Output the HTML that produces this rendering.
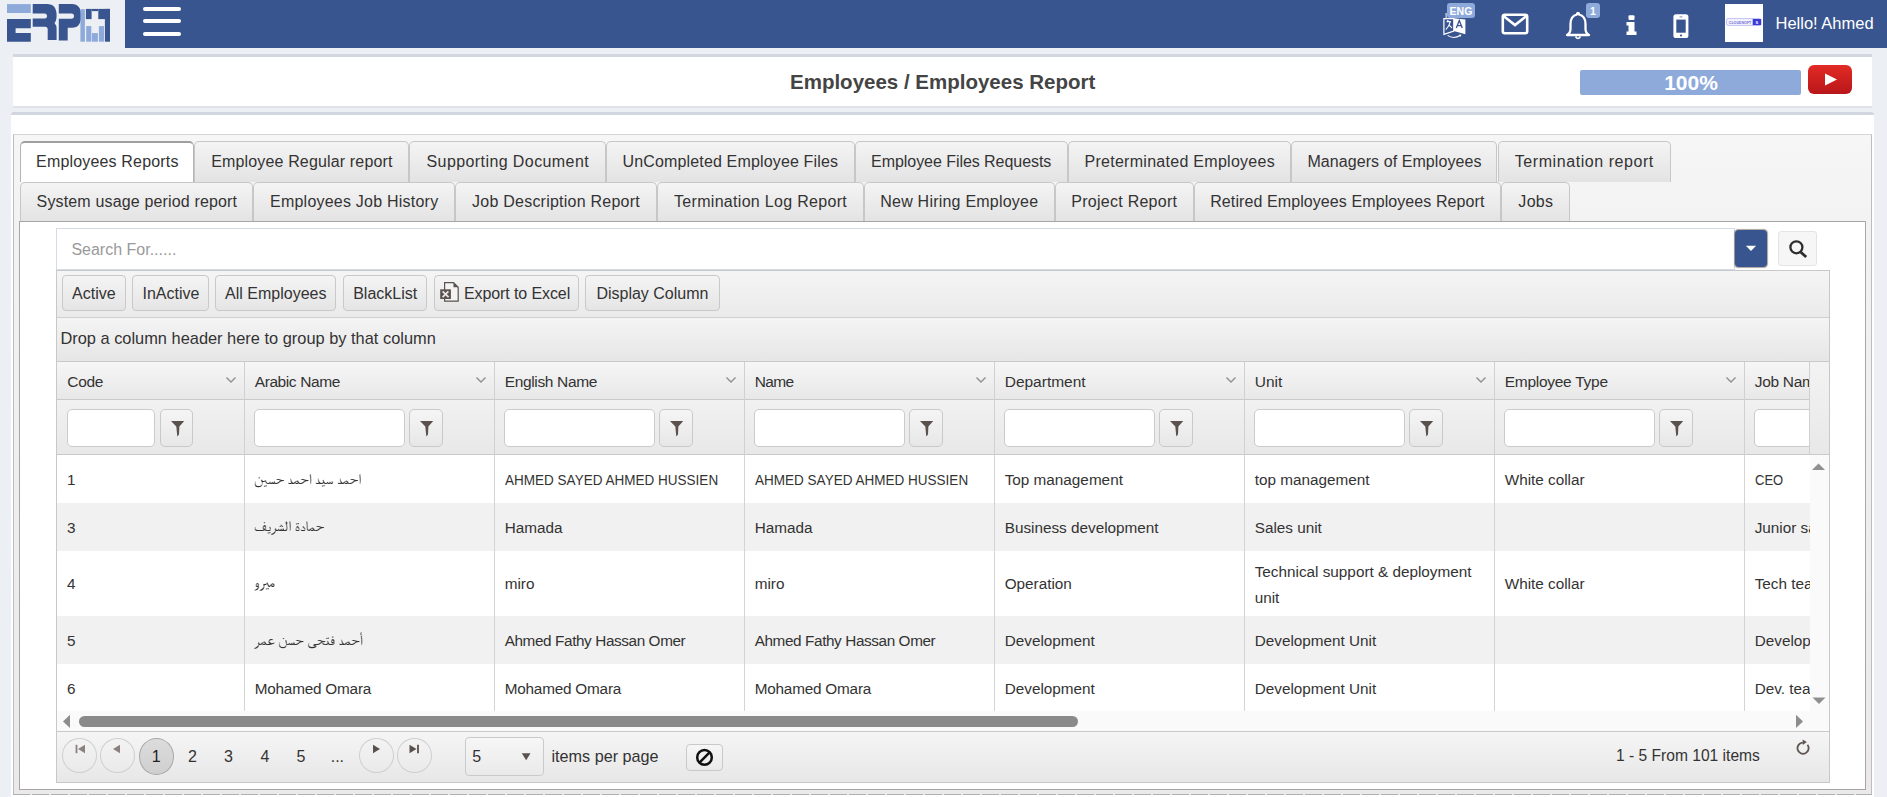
<!DOCTYPE html>
<html><head><meta charset="utf-8"><title>Employees Report</title>
<style>
html,body{margin:0;padding:0;}
body{width:1887px;height:797px;overflow:hidden;position:relative;background:#eceff4;font-family:"Liberation Sans", sans-serif;}
</style></head>
<body>
<div style="position:absolute;left:125px;top:0px;width:1762px;height:47.6px;background:#39558f"></div>
<svg style="position:absolute;left:0;top:0" width="125" height="47" viewBox="0 0 125 47">
<rect x="7" y="4.1" width="23.8" height="8.9" fill="#8eaadb"/>
<path d="M7 19.1H30.8V28.3H15.6V33.1H30.8V41.7H7Z" fill="#39558f"/>
<path d="M32.7 4.1H47Q56.6 4.1 56.6 15.5Q56.6 21 54.5 23Q56.6 25 56.6 29V40.1H47.7V29.5Q47.7 26.7 45 26.7H32.7V18.4H44.5Q47 18.4 47 15.9Q47 13.4 44.5 13.4H32.7Z" fill="#39558f"/>
<path d="M58.8 4.1H72Q81.1 4.1 81.1 15.9Q81.1 27.7 72 27.7H67.7V40.4H58.8V18.8H71.5Q74 18.8 74 16.1Q74 13.4 71.5 13.4H58.8Z" fill="#39558f"/>
<rect x="80.4" y="9.2" width="4.5" height="32.5" fill="#8eaadb"/>
<rect x="85.9" y="8.9" width="5.7" height="10.2" fill="#39558f"/>
<rect x="91.6" y="8.9" width="6.7" height="2.2" fill="#39558f"/>
<rect x="98.3" y="8.9" width="11.7" height="10.2" fill="#39558f"/>
<rect x="104.9" y="8.9" width="5.1" height="32.8" fill="#39558f"/>
<rect x="86.2" y="26.1" width="5.1" height="15.6" fill="#8eaadb"/>
<rect x="91.9" y="33.1" width="6" height="8.6" fill="#8eaadb"/>
<rect x="98.9" y="26.1" width="5.1" height="15.6" fill="#8eaadb"/>
</svg>
<div style="position:absolute;left:143px;top:7px;width:38px;height:4px;background:#fff;border-radius:2px"></div>
<div style="position:absolute;left:143px;top:19px;width:38px;height:4px;background:#fff;border-radius:2px"></div>
<div style="position:absolute;left:143px;top:32px;width:38px;height:4px;background:#fff;border-radius:2px"></div>
<svg style="position:absolute;left:1438px;top:0px" width="42" height="42" viewBox="0 0 42 42">
<path d="M5.9 18.6L15.8 18.4V31.1L5.9 34.4Z" fill="none" stroke="#fff" stroke-width="1.2"/>
<path d="M15.8 18.2L27.4 19.5V34.2L15.8 31.1Z" fill="#fff"/>
<path d="M8.1 13V17.8" stroke="#fff" stroke-width="1"/>
<path d="M18.3 28L21.3 20.6L24.3 28M19.3 25.6H23.4" fill="none" stroke="#39558f" stroke-width="1.3"/>
<path d="M8.6 21.6H12.8M12.4 21.6Q11 26.5 7.8 29.6M10.6 24.6L14 27.8M9.8 20V21.6" fill="none" stroke="#fff" stroke-width="1.1"/>
<path d="M9.6 35.4Q15.5 39.6 22.6 35.2" fill="none" stroke="#fff" stroke-width="1.1"/>
<path d="M20.8 34.6L23.4 34.8L22.4 37Z" fill="#fff"/>
</svg>
<div style="position:absolute;left:1447px;top:3px;width:28px;height:15px;background:#8eaadb;border-radius:3px"></div>
<div style="position:absolute;left:1161px;width:600px;text-align:center;top:5.75px;font-size:10.5px;line-height:10.5px;font-weight:700;color:#fff;white-space:nowrap;">ENG</div>
<svg style="position:absolute;left:1501px;top:13px" width="28" height="22" viewBox="0 0 28 22">
<rect x="1.8" y="1.8" width="24.4" height="18.4" rx="2" fill="none" stroke="#fff" stroke-width="2.6"/>
<path d="M2.5 3L14 12L25.5 3" fill="none" stroke="#fff" stroke-width="2.6"/>
</svg>
<svg style="position:absolute;left:1564px;top:12px" width="28" height="28" viewBox="0 0 28 28">
<path d="M13 2.5Q13 1 14 1Q15 1 15 2.5Q21.5 4 21.5 12V17Q21.5 21 25 23H3Q6.5 21 6.5 17V12Q6.5 4 13 2.5Z" fill="none" stroke="#fff" stroke-width="2.3" stroke-linejoin="round"/>
<path d="M11.5 24.5Q14 28.5 16.5 24.5" fill="none" stroke="#fff" stroke-width="1.6"/>
</svg>
<div style="position:absolute;left:1586px;top:3px;width:14px;height:15px;background:#8eaadb;border-radius:3px"></div>
<div style="position:absolute;left:1293px;width:600px;text-align:center;top:5.75px;font-size:10.5px;line-height:10.5px;font-weight:700;color:#fff;white-space:nowrap;">1</div>
<svg style="position:absolute;left:1625px;top:14px" width="14" height="22" viewBox="0 0 14 22">
<rect x="3.5" y="1.2" width="6" height="4.8" rx="1" fill="#fff"/>
<path d="M1.5 8H9.5V17.5H11.5V21H1.5V17.5H3.5V11.5H1.5Z" fill="#fff"/>
</svg>
<svg style="position:absolute;left:1672px;top:13px" width="18" height="26" viewBox="0 0 18 26">
<rect x="1.4" y="1.2" width="15" height="23.8" rx="2.6" fill="#fff"/>
<rect x="4.3" y="6.6" width="9.4" height="13.1" fill="#39558f"/>
<path d="M7.6 3.9H10.4" stroke="#39558f" stroke-width="0.7"/>
<circle cx="9" cy="22.5" r="1.1" fill="#39558f"/>
</svg>
<div style="position:absolute;left:1725px;top:4px;width:38px;height:38px;background:#fff"></div>
<svg style="position:absolute;left:1725px;top:4px" width="38" height="38" viewBox="0 0 38 38">
<rect x="1.5" y="14.6" width="34.5" height="6.8" rx="1.5" fill="#f4f4ff" stroke="#b4b4ee" stroke-width="0.8"/>
<rect x="27.7" y="15" width="8.4" height="6.1" fill="#3a3ad6"/>
<text x="3.8" y="19.8" font-family="Liberation Sans" font-size="4" font-weight="700" fill="#6a6ad0" textLength="22.5" lengthAdjust="spacingAndGlyphs">CLOUDSOFT</text>
<text x="31.9" y="19.9" font-family="Liberation Sans" font-size="4" font-weight="700" fill="#fff" text-anchor="middle">S</text>
</svg>
<div style="position:absolute;left:1775.5px;top:14.75px;font-size:16.5px;line-height:16.5px;font-weight:400;color:#fff;white-space:nowrap;">Hello! Ahmed</div>
<div style="position:absolute;left:13px;top:54px;width:1859px;height:54px;background:#fff;border-top:3px solid #d2d6de;border-bottom:2px solid #dfe2e8;box-sizing:border-box"></div>
<div style="position:absolute;left:790px;top:71.55px;font-size:20.5px;line-height:20.5px;font-weight:700;color:#444;white-space:nowrap;">Employees / Employees Report</div>
<div style="position:absolute;left:1580px;top:70px;width:221px;height:24.5px;background:#8eaadb;border-radius:2px"></div>
<div style="position:absolute;left:1391px;width:600px;text-align:center;top:72.30px;font-size:21px;line-height:21px;font-weight:700;color:#fff;white-space:nowrap;">100%</div>
<div style="position:absolute;left:1808px;top:65px;width:44px;height:29px;background:linear-gradient(#e22b25,#b8161a);border-radius:6px"></div>
<svg style="position:absolute;left:1808px;top:65px" width="44" height="29"><path d="M17 8.5L29 14.5L17 20.5Z" fill="#fff"/></svg>
<div style="position:absolute;left:11px;top:112px;width:1863px;height:700px;background:#fff;border-top:3px solid #d2d6de;border-radius:3px;box-sizing:border-box"></div>
<div style="position:absolute;left:13px;top:134px;width:1859px;height:661px;background:linear-gradient(#f6f6f6 0%,#f3f2f2 15%,#ebe9e9 100%);border:1px solid #bdbdbd;border-top-color:#d6d6d6;border-bottom:none;box-sizing:border-box"></div>
<div style="position:absolute;left:13px;top:794px;width:1859px;height:1px;background:repeating-linear-gradient(90deg,#b0b0b0 0 17px,#e6e6e6 17px 19px)"></div>
<div style="position:absolute;left:20.2px;top:140.5px;width:174.10000000000002px;height:41.5px;background:#fff;border:1px solid #b4b4b4;border-top:2px solid #9f9f9f;border-bottom:none;border-radius:5px 5px 0 0;box-sizing:border-box"></div>
<div style="position:absolute;left:194.3px;top:140.5px;width:215.0px;height:41.5px;background:linear-gradient(#f4f4f4,#e4e3e3);border:1px solid #c7c7c7;border-bottom:none;border-radius:5px 5px 0 0;box-sizing:border-box"></div>
<div style="position:absolute;left:409.3px;top:140.5px;width:196.59999999999997px;height:41.5px;background:linear-gradient(#f4f4f4,#e4e3e3);border:1px solid #c7c7c7;border-bottom:none;border-radius:5px 5px 0 0;box-sizing:border-box"></div>
<div style="position:absolute;left:605.9px;top:140.5px;width:248.70000000000005px;height:41.5px;background:linear-gradient(#f4f4f4,#e4e3e3);border:1px solid #c7c7c7;border-bottom:none;border-radius:5px 5px 0 0;box-sizing:border-box"></div>
<div style="position:absolute;left:854.6px;top:140.5px;width:213.19999999999993px;height:41.5px;background:linear-gradient(#f4f4f4,#e4e3e3);border:1px solid #c7c7c7;border-bottom:none;border-radius:5px 5px 0 0;box-sizing:border-box"></div>
<div style="position:absolute;left:1067.8px;top:140.5px;width:223.60000000000014px;height:41.5px;background:linear-gradient(#f4f4f4,#e4e3e3);border:1px solid #c7c7c7;border-bottom:none;border-radius:5px 5px 0 0;box-sizing:border-box"></div>
<div style="position:absolute;left:1291.4px;top:140.5px;width:206.0999999999999px;height:41.5px;background:linear-gradient(#f4f4f4,#e4e3e3);border:1px solid #c7c7c7;border-bottom:none;border-radius:5px 5px 0 0;box-sizing:border-box"></div>
<div style="position:absolute;left:1497.5px;top:140.5px;width:173.0999999999999px;height:41.5px;background:linear-gradient(#f4f4f4,#e4e3e3);border:1px solid #c7c7c7;border-bottom:none;border-radius:5px 5px 0 0;box-sizing:border-box"></div>
<div style="position:absolute;left:20.2px;top:182px;width:233.20000000000002px;height:39.5px;background:linear-gradient(#f4f4f4,#e4e3e3);border:1px solid #c7c7c7;border-bottom:none;border-radius:5px 5px 0 0;box-sizing:border-box"></div>
<div style="position:absolute;left:253.4px;top:182px;width:201.4px;height:39.5px;background:linear-gradient(#f4f4f4,#e4e3e3);border:1px solid #c7c7c7;border-bottom:none;border-radius:5px 5px 0 0;box-sizing:border-box"></div>
<div style="position:absolute;left:454.8px;top:182px;width:202.2px;height:39.5px;background:linear-gradient(#f4f4f4,#e4e3e3);border:1px solid #c7c7c7;border-bottom:none;border-radius:5px 5px 0 0;box-sizing:border-box"></div>
<div style="position:absolute;left:657px;top:182px;width:206.79999999999995px;height:39.5px;background:linear-gradient(#f4f4f4,#e4e3e3);border:1px solid #c7c7c7;border-bottom:none;border-radius:5px 5px 0 0;box-sizing:border-box"></div>
<div style="position:absolute;left:863.8px;top:182px;width:190.79999999999995px;height:39.5px;background:linear-gradient(#f4f4f4,#e4e3e3);border:1px solid #c7c7c7;border-bottom:none;border-radius:5px 5px 0 0;box-sizing:border-box"></div>
<div style="position:absolute;left:1054.6px;top:182px;width:139.10000000000014px;height:39.5px;background:linear-gradient(#f4f4f4,#e4e3e3);border:1px solid #c7c7c7;border-bottom:none;border-radius:5px 5px 0 0;box-sizing:border-box"></div>
<div style="position:absolute;left:1193.7px;top:182px;width:307.29999999999995px;height:39.5px;background:linear-gradient(#f4f4f4,#e4e3e3);border:1px solid #c7c7c7;border-bottom:none;border-radius:5px 5px 0 0;box-sizing:border-box"></div>
<div style="position:absolute;left:1501px;top:182px;width:69.40000000000009px;height:39.5px;background:linear-gradient(#f4f4f4,#e4e3e3);border:1px solid #c7c7c7;border-bottom:none;border-radius:5px 5px 0 0;box-sizing:border-box"></div>
<div style="position:absolute;left:19px;top:221px;width:1847px;height:568.5px;background:#fff;border:1.5px solid #a6a6a6;box-sizing:border-box"></div>
<div style="position:absolute;left:-192.75px;width:600px;text-align:center;top:153.70px;font-size:16px;line-height:16px;font-weight:400;color:#333;white-space:nowrap;letter-spacing:0.169px;text-indent:0.169px">Employees Reports</div>
<div style="position:absolute;left:1.8000000000000114px;width:600px;text-align:center;top:153.70px;font-size:16px;line-height:16px;font-weight:400;color:#333;white-space:nowrap;letter-spacing:0.155px;text-indent:0.155px">Employee Regular report</div>
<div style="position:absolute;left:207.60000000000002px;width:600px;text-align:center;top:153.70px;font-size:16px;line-height:16px;font-weight:400;color:#333;white-space:nowrap;letter-spacing:0.411px;text-indent:0.411px">Supporting Document</div>
<div style="position:absolute;left:430.25px;width:600px;text-align:center;top:153.70px;font-size:16px;line-height:16px;font-weight:400;color:#333;white-space:nowrap;letter-spacing:0.152px;text-indent:0.152px">UnCompleted Employee Files</div>
<div style="position:absolute;left:661.2px;width:600px;text-align:center;top:153.70px;font-size:16px;line-height:16px;font-weight:400;color:#333;white-space:nowrap;letter-spacing:-0.050px;text-indent:-0.050px">Employee Files Requests</div>
<div style="position:absolute;left:879.5999999999999px;width:600px;text-align:center;top:153.70px;font-size:16px;line-height:16px;font-weight:400;color:#333;white-space:nowrap;letter-spacing:0.282px;text-indent:0.282px">Preterminated Employees</div>
<div style="position:absolute;left:1094.45px;width:600px;text-align:center;top:153.70px;font-size:16px;line-height:16px;font-weight:400;color:#333;white-space:nowrap;letter-spacing:0.070px;text-indent:0.070px">Managers of Employees</div>
<div style="position:absolute;left:1284.05px;width:600px;text-align:center;top:153.70px;font-size:16px;line-height:16px;font-weight:400;color:#333;white-space:nowrap;letter-spacing:0.559px;text-indent:0.559px">Termination report</div>
<div style="position:absolute;left:-163.2px;width:600px;text-align:center;top:193.90px;font-size:16px;line-height:16px;font-weight:400;color:#333;white-space:nowrap;letter-spacing:0.156px;text-indent:0.156px">System usage period report</div>
<div style="position:absolute;left:54.10000000000002px;width:600px;text-align:center;top:193.90px;font-size:16px;line-height:16px;font-weight:400;color:#333;white-space:nowrap;letter-spacing:0.225px;text-indent:0.225px">Employees Job History</div>
<div style="position:absolute;left:255.89999999999998px;width:600px;text-align:center;top:193.90px;font-size:16px;line-height:16px;font-weight:400;color:#333;white-space:nowrap;letter-spacing:0.238px;text-indent:0.238px">Job Description Report</div>
<div style="position:absolute;left:460.4px;width:600px;text-align:center;top:193.90px;font-size:16px;line-height:16px;font-weight:400;color:#333;white-space:nowrap;letter-spacing:0.310px;text-indent:0.310px">Termination Log Report</div>
<div style="position:absolute;left:659.1999999999999px;width:600px;text-align:center;top:193.90px;font-size:16px;line-height:16px;font-weight:400;color:#333;white-space:nowrap;letter-spacing:0.222px;text-indent:0.222px">New Hiring Employee</div>
<div style="position:absolute;left:824.1500000000001px;width:600px;text-align:center;top:193.90px;font-size:16px;line-height:16px;font-weight:400;color:#333;white-space:nowrap;letter-spacing:0.262px;text-indent:0.262px">Project Report</div>
<div style="position:absolute;left:1047.35px;width:600px;text-align:center;top:193.90px;font-size:16px;line-height:16px;font-weight:400;color:#333;white-space:nowrap;letter-spacing:0.091px;text-indent:0.091px">Retired Employees Employees Report</div>
<div style="position:absolute;left:1235.7px;width:600px;text-align:center;top:193.90px;font-size:16px;line-height:16px;font-weight:400;color:#333;white-space:nowrap;letter-spacing:0.300px;text-indent:0.300px">Jobs</div>
<div style="position:absolute;left:56px;top:228px;width:1679px;height:42px;background:#fff;border:1px solid #d5dbe5;box-sizing:border-box"></div>
<div style="position:absolute;left:71.4px;top:242.00px;font-size:16px;line-height:16px;font-weight:400;color:#9a9a9a;white-space:nowrap;">Search For......</div>
<div style="position:absolute;left:1735px;top:229.5px;width:32.2px;height:37.8px;background:#39558f;border-radius:4px;box-shadow:0 0 1px 0.3px rgba(60,40,20,.42)"></div>
<svg style="position:absolute;left:1735px;top:229px" width="32" height="38"><path d="M10.9 16.8H21.1L16 22Z" fill="#fff"/></svg>
<div style="position:absolute;left:1778px;top:231px;width:38.5px;height:34.6px;background:#f6f6f6;border:1px solid #e4e4e4;border-radius:3px;box-sizing:border-box"></div>
<svg style="position:absolute;left:1778px;top:231px" width="38" height="35"><circle cx="18.4" cy="16.3" r="6" fill="none" stroke="#2d2d2d" stroke-width="2.3"/><path d="M22.6 21L28.2 26" stroke="#2d2d2d" stroke-width="2.8"/></svg>
<div style="position:absolute;left:56px;top:270px;width:1773.5px;height:512.5px;background:#fff;border:1px solid #c8c8c8;box-sizing:border-box"></div>
<div style="position:absolute;left:57px;top:271px;width:1771.5px;height:46.5px;background:linear-gradient(#f5f5f5,#ebeaea);border-bottom:1px solid #cfcfcf;box-sizing:border-box"></div>
<div style="position:absolute;left:62px;top:275.4px;width:63.7px;height:36px;background:linear-gradient(#f4f4f4,#e6e5e5);border:1px solid #c9c9c9;border-radius:4px;box-sizing:border-box"></div>
<div style="position:absolute;left:-206.15px;width:600px;text-align:center;top:286.00px;font-size:16px;line-height:16px;font-weight:400;color:#333;white-space:nowrap;">Active</div>
<div style="position:absolute;left:132.3px;top:275.4px;width:77.19999999999999px;height:36px;background:linear-gradient(#f4f4f4,#e6e5e5);border:1px solid #c9c9c9;border-radius:4px;box-sizing:border-box"></div>
<div style="position:absolute;left:-129.1px;width:600px;text-align:center;top:286.00px;font-size:16px;line-height:16px;font-weight:400;color:#333;white-space:nowrap;">InActive</div>
<div style="position:absolute;left:215.1px;top:275.4px;width:121.29999999999998px;height:36px;background:linear-gradient(#f4f4f4,#e6e5e5);border:1px solid #c9c9c9;border-radius:4px;box-sizing:border-box"></div>
<div style="position:absolute;left:-24.25px;width:600px;text-align:center;top:286.00px;font-size:16px;line-height:16px;font-weight:400;color:#333;white-space:nowrap;">All Employees</div>
<div style="position:absolute;left:343.1px;top:275.4px;width:84.19999999999999px;height:36px;background:linear-gradient(#f4f4f4,#e6e5e5);border:1px solid #c9c9c9;border-radius:4px;box-sizing:border-box"></div>
<div style="position:absolute;left:85.20000000000005px;width:600px;text-align:center;top:286.00px;font-size:16px;line-height:16px;font-weight:400;color:#333;white-space:nowrap;">BlackList</div>
<div style="position:absolute;left:434.4px;top:275.4px;width:145.0px;height:36px;background:linear-gradient(#f4f4f4,#e6e5e5);border:1px solid #c9c9c9;border-radius:4px;box-sizing:border-box"></div>
<div style="position:absolute;left:464px;top:286.00px;font-size:16px;line-height:16px;font-weight:400;color:#333;white-space:nowrap;letter-spacing:-0.1px">Export to Excel</div>
<div style="position:absolute;left:585.3px;top:275.4px;width:134.30000000000007px;height:36px;background:linear-gradient(#f4f4f4,#e6e5e5);border:1px solid #c9c9c9;border-radius:4px;box-sizing:border-box"></div>
<div style="position:absolute;left:352.45000000000005px;width:600px;text-align:center;top:286.00px;font-size:16px;line-height:16px;font-weight:400;color:#333;white-space:nowrap;">Display Column</div>
<svg style="position:absolute;left:439px;top:281px" width="22" height="23" viewBox="0 0 22 23">
<path d="M5.6 1.6H14.5L19.2 6.3V20.1H5.6Z" fill="#f3f3f3" stroke="#5b524f" stroke-width="1.2"/>
<path d="M14.5 1.6L19.2 6.3H14.5Z" fill="#5b524f"/>
<rect x="1.2" y="8.3" width="10.7" height="9.7" fill="#5b524f"/>
<path d="M3.6 10.3L9.6 16.1M9.4 10.3L3.6 16.1" stroke="#e9e8e8" stroke-width="1.7"/>
</svg>
<div style="position:absolute;left:57px;top:317.5px;width:1771.5px;height:44px;background:linear-gradient(#f4f4f4,#e7e6e6);border-bottom:1px solid #c9c9c9;box-sizing:border-box"></div>
<div style="position:absolute;left:60.4px;top:329.80px;font-size:16.4px;line-height:16.4px;font-weight:400;color:#333;white-space:nowrap;">Drop a column header here to group by that column</div>
<div style="position:absolute;left:57px;top:361.5px;width:1771.5px;height:38px;background:linear-gradient(#f6f6f6,#e9e8e8);border-bottom:1px solid #c9c9c9;box-sizing:border-box"></div>
<div style="position:absolute;left:57px;top:399.5px;width:1771.5px;height:55px;background:linear-gradient(#f1f1f1,#e9e8e8);border-bottom:1px solid #c9c9c9;box-sizing:border-box"></div>
<div style="position:absolute;left:244.0px;top:361.5px;width:1px;height:349.5px;background:#d0d0d0"></div>
<div style="position:absolute;left:494.0px;top:361.5px;width:1px;height:349.5px;background:#d0d0d0"></div>
<div style="position:absolute;left:744.0px;top:361.5px;width:1px;height:349.5px;background:#d0d0d0"></div>
<div style="position:absolute;left:994.0px;top:361.5px;width:1px;height:349.5px;background:#d0d0d0"></div>
<div style="position:absolute;left:1244.0px;top:361.5px;width:1px;height:349.5px;background:#d0d0d0"></div>
<div style="position:absolute;left:1494.0px;top:361.5px;width:1px;height:349.5px;background:#d0d0d0"></div>
<div style="position:absolute;left:1744.0px;top:361.5px;width:1px;height:349.5px;background:#d0d0d0"></div>
<div style="position:absolute;left:57px;top:361.5px;width:187.5px;height:350px;overflow:hidden">
<div style="position:absolute;left:10.299999999999997px;top:12.05px;font-size:15.5px;line-height:15.5px;color:#333;white-space:nowrap;letter-spacing:-0.33px">Code</div>
<svg style="position:absolute;left:167.5px;top:14.2px" width="12" height="8"><path d="M1.5 1.5L6 6L10.5 1.5" fill="none" stroke="#8f8f8f" stroke-width="1.4"/></svg>
<div style="position:absolute;left:10.299999999999997px;top:47.5px;width:88.2px;height:38px;background:#fff;border:1px solid #cbcbcb;border-radius:5px;box-sizing:border-box"></div>
<div style="position:absolute;left:102.5px;top:47.5px;width:33.5px;height:38px;background:linear-gradient(#f5f5f5,#e8e7e7);border:1px solid #c9c9c9;border-radius:5px;box-sizing:border-box"></div>
<svg style="position:absolute;left:102.5px;top:47.5px" width="34" height="38"><path d="M11 11.9H24.2L19.4 17.4L19 25.6L17.3 27.4L16.3 17.4Z" fill="#5a504d"/></svg>
</div>
<div style="position:absolute;left:244.5px;top:361.5px;width:250.0px;height:350px;overflow:hidden">
<div style="position:absolute;left:10.2px;top:12.05px;font-size:15.5px;line-height:15.5px;color:#333;white-space:nowrap;letter-spacing:-0.4px">Arabic Name</div>
<svg style="position:absolute;left:230.0px;top:14.2px" width="12" height="8"><path d="M1.5 1.5L6 6L10.5 1.5" fill="none" stroke="#8f8f8f" stroke-width="1.4"/></svg>
<div style="position:absolute;left:9.5px;top:47.5px;width:151.4px;height:38px;background:#fff;border:1px solid #cbcbcb;border-radius:5px;box-sizing:border-box"></div>
<div style="position:absolute;left:164.9px;top:47.5px;width:33.5px;height:38px;background:linear-gradient(#f5f5f5,#e8e7e7);border:1px solid #c9c9c9;border-radius:5px;box-sizing:border-box"></div>
<svg style="position:absolute;left:164.9px;top:47.5px" width="34" height="38"><path d="M11 11.9H24.2L19.4 17.4L19 25.6L17.3 27.4L16.3 17.4Z" fill="#5a504d"/></svg>
</div>
<div style="position:absolute;left:494.5px;top:361.5px;width:250.0px;height:350px;overflow:hidden">
<div style="position:absolute;left:10.2px;top:12.05px;font-size:15.5px;line-height:15.5px;color:#333;white-space:nowrap;letter-spacing:-0.34px">English Name</div>
<svg style="position:absolute;left:230.0px;top:14.2px" width="12" height="8"><path d="M1.5 1.5L6 6L10.5 1.5" fill="none" stroke="#8f8f8f" stroke-width="1.4"/></svg>
<div style="position:absolute;left:9.5px;top:47.5px;width:151.4px;height:38px;background:#fff;border:1px solid #cbcbcb;border-radius:5px;box-sizing:border-box"></div>
<div style="position:absolute;left:164.9px;top:47.5px;width:33.5px;height:38px;background:linear-gradient(#f5f5f5,#e8e7e7);border:1px solid #c9c9c9;border-radius:5px;box-sizing:border-box"></div>
<svg style="position:absolute;left:164.9px;top:47.5px" width="34" height="38"><path d="M11 11.9H24.2L19.4 17.4L19 25.6L17.3 27.4L16.3 17.4Z" fill="#5a504d"/></svg>
</div>
<div style="position:absolute;left:744.5px;top:361.5px;width:250.0px;height:350px;overflow:hidden">
<div style="position:absolute;left:10.2px;top:12.05px;font-size:15.5px;line-height:15.5px;color:#333;white-space:nowrap;letter-spacing:-0.67px">Name</div>
<svg style="position:absolute;left:230.0px;top:14.2px" width="12" height="8"><path d="M1.5 1.5L6 6L10.5 1.5" fill="none" stroke="#8f8f8f" stroke-width="1.4"/></svg>
<div style="position:absolute;left:9.5px;top:47.5px;width:151.4px;height:38px;background:#fff;border:1px solid #cbcbcb;border-radius:5px;box-sizing:border-box"></div>
<div style="position:absolute;left:164.9px;top:47.5px;width:33.5px;height:38px;background:linear-gradient(#f5f5f5,#e8e7e7);border:1px solid #c9c9c9;border-radius:5px;box-sizing:border-box"></div>
<svg style="position:absolute;left:164.9px;top:47.5px" width="34" height="38"><path d="M11 11.9H24.2L19.4 17.4L19 25.6L17.3 27.4L16.3 17.4Z" fill="#5a504d"/></svg>
</div>
<div style="position:absolute;left:994.5px;top:361.5px;width:250.0px;height:350px;overflow:hidden">
<div style="position:absolute;left:10.2px;top:12.05px;font-size:15.5px;line-height:15.5px;color:#333;white-space:nowrap;letter-spacing:0px">Department</div>
<svg style="position:absolute;left:230.0px;top:14.2px" width="12" height="8"><path d="M1.5 1.5L6 6L10.5 1.5" fill="none" stroke="#8f8f8f" stroke-width="1.4"/></svg>
<div style="position:absolute;left:9.5px;top:47.5px;width:151.4px;height:38px;background:#fff;border:1px solid #cbcbcb;border-radius:5px;box-sizing:border-box"></div>
<div style="position:absolute;left:164.9px;top:47.5px;width:33.5px;height:38px;background:linear-gradient(#f5f5f5,#e8e7e7);border:1px solid #c9c9c9;border-radius:5px;box-sizing:border-box"></div>
<svg style="position:absolute;left:164.9px;top:47.5px" width="34" height="38"><path d="M11 11.9H24.2L19.4 17.4L19 25.6L17.3 27.4L16.3 17.4Z" fill="#5a504d"/></svg>
</div>
<div style="position:absolute;left:1244.5px;top:361.5px;width:250.0px;height:350px;overflow:hidden">
<div style="position:absolute;left:10.2px;top:12.05px;font-size:15.5px;line-height:15.5px;color:#333;white-space:nowrap;letter-spacing:0px">Unit</div>
<svg style="position:absolute;left:230.0px;top:14.2px" width="12" height="8"><path d="M1.5 1.5L6 6L10.5 1.5" fill="none" stroke="#8f8f8f" stroke-width="1.4"/></svg>
<div style="position:absolute;left:9.5px;top:47.5px;width:151.4px;height:38px;background:#fff;border:1px solid #cbcbcb;border-radius:5px;box-sizing:border-box"></div>
<div style="position:absolute;left:164.9px;top:47.5px;width:33.5px;height:38px;background:linear-gradient(#f5f5f5,#e8e7e7);border:1px solid #c9c9c9;border-radius:5px;box-sizing:border-box"></div>
<svg style="position:absolute;left:164.9px;top:47.5px" width="34" height="38"><path d="M11 11.9H24.2L19.4 17.4L19 25.6L17.3 27.4L16.3 17.4Z" fill="#5a504d"/></svg>
</div>
<div style="position:absolute;left:1494.5px;top:361.5px;width:250.0px;height:350px;overflow:hidden">
<div style="position:absolute;left:10.2px;top:12.05px;font-size:15.5px;line-height:15.5px;color:#333;white-space:nowrap;letter-spacing:-0.27px">Employee Type</div>
<svg style="position:absolute;left:230.0px;top:14.2px" width="12" height="8"><path d="M1.5 1.5L6 6L10.5 1.5" fill="none" stroke="#8f8f8f" stroke-width="1.4"/></svg>
<div style="position:absolute;left:9.5px;top:47.5px;width:151.4px;height:38px;background:#fff;border:1px solid #cbcbcb;border-radius:5px;box-sizing:border-box"></div>
<div style="position:absolute;left:164.9px;top:47.5px;width:33.5px;height:38px;background:linear-gradient(#f5f5f5,#e8e7e7);border:1px solid #c9c9c9;border-radius:5px;box-sizing:border-box"></div>
<svg style="position:absolute;left:164.9px;top:47.5px" width="34" height="38"><path d="M11 11.9H24.2L19.4 17.4L19 25.6L17.3 27.4L16.3 17.4Z" fill="#5a504d"/></svg>
</div>
<div style="position:absolute;left:1744.5px;top:361.5px;width:64.5px;height:350px;overflow:hidden">
<div style="position:absolute;left:10.2px;top:12.05px;font-size:15.5px;line-height:15.5px;color:#333;white-space:nowrap;letter-spacing:-0.3px">Job Name</div>
<div style="position:absolute;left:9.5px;top:47.5px;width:151.4px;height:38px;background:#fff;border:1px solid #cbcbcb;border-radius:5px;box-sizing:border-box"></div>
</div>
<div style="position:absolute;left:1809px;top:361.5px;width:19.5px;height:93px;background:linear-gradient(#f3f3f3,#e9e8e8);border-left:1px solid #d0d0d0;border-bottom:1px solid #c9c9c9;box-sizing:border-box"></div>
<div style="position:absolute;left:57px;top:454.5px;width:1753px;height:48.5px;background:#fff"></div>
<div style="position:absolute;left:57px;top:503px;width:1753px;height:47.5px;background:#f1f1f1"></div>
<div style="position:absolute;left:57px;top:550.5px;width:1753px;height:65.5px;background:#fff"></div>
<div style="position:absolute;left:57px;top:616px;width:1753px;height:48px;background:#f1f1f1"></div>
<div style="position:absolute;left:57px;top:664px;width:1753px;height:47px;background:#fff"></div>
<div style="position:absolute;left:244.0px;top:454.5px;width:1px;height:256.5px;background:#d4d4d4"></div>
<div style="position:absolute;left:494.0px;top:454.5px;width:1px;height:256.5px;background:#d4d4d4"></div>
<div style="position:absolute;left:744.0px;top:454.5px;width:1px;height:256.5px;background:#d4d4d4"></div>
<div style="position:absolute;left:994.0px;top:454.5px;width:1px;height:256.5px;background:#d4d4d4"></div>
<div style="position:absolute;left:1244.0px;top:454.5px;width:1px;height:256.5px;background:#d4d4d4"></div>
<div style="position:absolute;left:1494.0px;top:454.5px;width:1px;height:256.5px;background:#d4d4d4"></div>
<div style="position:absolute;left:1744.0px;top:454.5px;width:1px;height:256.5px;background:#d4d4d4"></div>
<div style="position:absolute;left:57px;top:454.5px;width:187.5px;height:48.5px;overflow:hidden"><div style="position:absolute;left:10px;top:17.40px;font-size:15.3px;line-height:15.3px;color:#333;white-space:nowrap;">1</div></div>
<svg style="position:absolute;left:253px;top:473px" width="109" height="16" fill="#333" shape-rendering="crispEdges"><rect x="56" y="1" width="1" height="1" fill-opacity="0.08"/><rect x="57" y="1" width="1" height="1" fill-opacity="0.42"/><rect x="106" y="1" width="2" height="1" fill-opacity="0.25"/><rect x="56" y="2" width="1" height="1" fill-opacity="0.17"/><rect x="57" y="2" width="1" height="1" fill-opacity="0.67"/><rect x="58" y="2" width="1" height="1" fill-opacity="0.08"/><rect x="106" y="2" width="1" height="1" fill-opacity="0.50"/><rect x="107" y="2" width="1" height="1" fill-opacity="0.33"/><rect x="56" y="3" width="1" height="1" fill-opacity="0.08"/><rect x="57" y="3" width="1" height="1" fill-opacity="0.67"/><rect x="58" y="3" width="1" height="1" fill-opacity="0.08"/><rect x="106" y="3" width="2" height="1" fill-opacity="0.42"/><rect x="5" y="4" width="1" height="1" fill-opacity="0.33"/><rect x="6" y="4" width="1" height="1" fill-opacity="0.50"/><rect x="56" y="4" width="1" height="1" fill-opacity="0.08"/><rect x="57" y="4" width="1" height="1" fill-opacity="0.67"/><rect x="58" y="4" width="1" height="1" fill-opacity="0.17"/><rect x="106" y="4" width="1" height="1" fill-opacity="0.33"/><rect x="107" y="4" width="1" height="1" fill-opacity="0.50"/><rect x="5" y="5" width="1" height="1" fill-opacity="0.08"/><rect x="6" y="5" width="1" height="1" fill-opacity="0.33"/><rect x="37" y="5" width="1" height="1" fill-opacity="0.17"/><rect x="57" y="5" width="1" height="1" fill-opacity="0.58"/><rect x="58" y="5" width="1" height="1" fill-opacity="0.17"/><rect x="64" y="5" width="1" height="1" fill-opacity="0.08"/><rect x="65" y="5" width="1" height="1" fill-opacity="0.17"/><rect x="86" y="5" width="1" height="1" fill-opacity="0.08"/><rect x="87" y="5" width="1" height="1" fill-opacity="0.17"/><rect x="106" y="5" width="1" height="1" fill-opacity="0.25"/><rect x="107" y="5" width="1" height="1" fill-opacity="0.58"/><rect x="8" y="6" width="1" height="1" fill-opacity="0.17"/><rect x="9" y="6" width="1" height="1" fill-opacity="0.08"/><rect x="23" y="6" width="1" height="1" fill-opacity="0.33"/><rect x="24" y="6" width="1" height="1" fill-opacity="0.83"/><rect x="25" y="6" width="1" height="1" fill-opacity="0.92"/><rect x="26" y="6" width="1" height="1" fill-opacity="0.75"/><rect x="27" y="6" width="1" height="1" fill-opacity="0.42"/><rect x="28" y="6" width="1" height="1" fill-opacity="0.17"/><rect x="37" y="6" width="1" height="1" fill-opacity="0.42"/><rect x="38" y="6" width="1" height="1" fill-opacity="0.17"/><rect x="47" y="6" width="1" height="1" fill-opacity="0.08"/><rect x="48" y="6" width="1" height="1" fill-opacity="0.58"/><rect x="49" y="6" width="1" height="1" fill-opacity="0.92"/><rect x="50" y="6" width="1" height="1" fill-opacity="0.83"/><rect x="51" y="6" width="1" height="1" fill-opacity="0.58"/><rect x="52" y="6" width="1" height="1" fill-opacity="0.25"/><rect x="53" y="6" width="1" height="1" fill-opacity="0.08"/><rect x="57" y="6" width="1" height="1" fill-opacity="0.58"/><rect x="58" y="6" width="1" height="1" fill-opacity="0.25"/><rect x="64" y="6" width="1" height="1" fill-opacity="0.08"/><rect x="65" y="6" width="1" height="1" fill-opacity="0.42"/><rect x="70" y="6" width="1" height="1" fill-opacity="0.08"/><rect x="86" y="6" width="1" height="1" fill-opacity="0.08"/><rect x="87" y="6" width="1" height="1" fill-opacity="0.42"/><rect x="97" y="6" width="1" height="1" fill-opacity="0.33"/><rect x="98" y="6" width="1" height="1" fill-opacity="0.83"/><rect x="99" y="6" width="1" height="1" fill-opacity="0.92"/><rect x="100" y="6" width="1" height="1" fill-opacity="0.75"/><rect x="101" y="6" width="1" height="1" fill-opacity="0.42"/><rect x="102" y="6" width="1" height="1" fill-opacity="0.17"/><rect x="106" y="6" width="1" height="1" fill-opacity="0.25"/><rect x="107" y="6" width="1" height="1" fill-opacity="0.58"/><rect x="7" y="7" width="1" height="1" fill-opacity="0.08"/><rect x="8" y="7" width="1" height="1" fill-opacity="0.75"/><rect x="9" y="7" width="1" height="1" fill-opacity="0.50"/><rect x="11" y="7" width="1" height="1" fill-opacity="0.25"/><rect x="12" y="7" width="1" height="1" fill-opacity="0.58"/><rect x="13" y="7" width="1" height="1" fill-opacity="0.08"/><rect x="26" y="7" width="1" height="1" fill-opacity="0.33"/><rect x="27" y="7" width="1" height="1" fill-opacity="0.83"/><rect x="28" y="7" width="2" height="1" fill-opacity="1.00"/><rect x="30" y="7" width="1" height="1" fill-opacity="0.83"/><rect x="31" y="7" width="1" height="1" fill-opacity="0.08"/><rect x="37" y="7" width="1" height="1" fill-opacity="0.33"/><rect x="38" y="7" width="1" height="1" fill-opacity="0.42"/><rect x="43" y="7" width="1" height="1" fill-opacity="0.17"/><rect x="44" y="7" width="1" height="1" fill-opacity="0.33"/><rect x="45" y="7" width="1" height="1" fill-opacity="0.08"/><rect x="50" y="7" width="1" height="1" fill-opacity="0.17"/><rect x="51" y="7" width="1" height="1" fill-opacity="0.58"/><rect x="52" y="7" width="3" height="1" fill-opacity="1.00"/><rect x="55" y="7" width="1" height="1" fill-opacity="0.42"/><rect x="57" y="7" width="1" height="1" fill-opacity="0.58"/><rect x="58" y="7" width="1" height="1" fill-opacity="0.25"/><rect x="64" y="7" width="1" height="1" fill-opacity="0.08"/><rect x="65" y="7" width="1" height="1" fill-opacity="0.58"/><rect x="66" y="7" width="1" height="1" fill-opacity="0.08"/><rect x="69" y="7" width="1" height="1" fill-opacity="0.25"/><rect x="70" y="7" width="1" height="1" fill-opacity="0.58"/><rect x="86" y="7" width="1" height="1" fill-opacity="0.08"/><rect x="87" y="7" width="1" height="1" fill-opacity="0.58"/><rect x="88" y="7" width="1" height="1" fill-opacity="0.08"/><rect x="92" y="7" width="1" height="1" fill-opacity="0.08"/><rect x="93" y="7" width="1" height="1" fill-opacity="0.33"/><rect x="94" y="7" width="1" height="1" fill-opacity="0.08"/><rect x="100" y="7" width="1" height="1" fill-opacity="0.33"/><rect x="101" y="7" width="1" height="1" fill-opacity="0.83"/><rect x="102" y="7" width="2" height="1" fill-opacity="1.00"/><rect x="104" y="7" width="1" height="1" fill-opacity="0.83"/><rect x="105" y="7" width="1" height="1" fill-opacity="0.08"/><rect x="106" y="7" width="1" height="1" fill-opacity="0.17"/><rect x="107" y="7" width="1" height="1" fill-opacity="0.58"/><rect x="2" y="8" width="1" height="1" fill-opacity="0.17"/><rect x="8" y="8" width="1" height="1" fill-opacity="0.50"/><rect x="9" y="8" width="2" height="1" fill-opacity="1.00"/><rect x="11" y="8" width="2" height="1" fill-opacity="0.75"/><rect x="13" y="8" width="1" height="1" fill-opacity="0.25"/><rect x="16" y="8" width="2" height="1" fill-opacity="0.08"/><rect x="19" y="8" width="2" height="1" fill-opacity="0.08"/><rect x="21" y="8" width="1" height="1" fill-opacity="0.42"/><rect x="25" y="8" width="1" height="1" fill-opacity="0.17"/><rect x="26" y="8" width="2" height="1" fill-opacity="0.75"/><rect x="28" y="8" width="1" height="1" fill-opacity="0.33"/><rect x="29" y="8" width="1" height="1" fill-opacity="0.17"/><rect x="37" y="8" width="1" height="1" fill-opacity="0.25"/><rect x="38" y="8" width="1" height="1" fill-opacity="0.67"/><rect x="39" y="8" width="1" height="1" fill-opacity="0.08"/><rect x="41" y="8" width="1" height="1" fill-opacity="0.08"/><rect x="42" y="8" width="1" height="1" fill-opacity="0.50"/><rect x="43" y="8" width="1" height="1" fill-opacity="0.58"/><rect x="44" y="8" width="1" height="1" fill-opacity="0.83"/><rect x="45" y="8" width="1" height="1" fill-opacity="0.50"/><rect x="50" y="8" width="1" height="1" fill-opacity="0.42"/><rect x="51" y="8" width="1" height="1" fill-opacity="0.83"/><rect x="52" y="8" width="1" height="1" fill-opacity="0.50"/><rect x="53" y="8" width="1" height="1" fill-opacity="0.25"/><rect x="54" y="8" width="1" height="1" fill-opacity="0.08"/><rect x="57" y="8" width="1" height="1" fill-opacity="0.50"/><rect x="58" y="8" width="1" height="1" fill-opacity="0.17"/><rect x="65" y="8" width="1" height="1" fill-opacity="0.58"/><rect x="66" y="8" width="1" height="1" fill-opacity="0.33"/><rect x="69" y="8" width="1" height="1" fill-opacity="0.08"/><rect x="70" y="8" width="1" height="1" fill-opacity="0.75"/><rect x="71" y="8" width="1" height="1" fill-opacity="0.17"/><rect x="74" y="8" width="1" height="1" fill-opacity="0.08"/><rect x="76" y="8" width="2" height="1" fill-opacity="0.08"/><rect x="78" y="8" width="1" height="1" fill-opacity="0.17"/><rect x="79" y="8" width="1" height="1" fill-opacity="0.42"/><rect x="87" y="8" width="1" height="1" fill-opacity="0.58"/><rect x="88" y="8" width="1" height="1" fill-opacity="0.33"/><rect x="91" y="8" width="1" height="1" fill-opacity="0.33"/><rect x="92" y="8" width="1" height="1" fill-opacity="0.58"/><rect x="93" y="8" width="1" height="1" fill-opacity="0.75"/><rect x="94" y="8" width="1" height="1" fill-opacity="0.67"/><rect x="95" y="8" width="1" height="1" fill-opacity="0.08"/><rect x="99" y="8" width="1" height="1" fill-opacity="0.17"/><rect x="100" y="8" width="2" height="1" fill-opacity="0.75"/><rect x="102" y="8" width="1" height="1" fill-opacity="0.33"/><rect x="103" y="8" width="1" height="1" fill-opacity="0.17"/><rect x="106" y="8" width="1" height="1" fill-opacity="0.17"/><rect x="107" y="8" width="1" height="1" fill-opacity="0.50"/><rect x="1" y="9" width="1" height="1" fill-opacity="0.08"/><rect x="2" y="9" width="1" height="1" fill-opacity="0.33"/><rect x="8" y="9" width="1" height="1" fill-opacity="0.17"/><rect x="9" y="9" width="1" height="1" fill-opacity="0.50"/><rect x="12" y="9" width="1" height="1" fill-opacity="0.33"/><rect x="13" y="9" width="1" height="1" fill-opacity="0.75"/><rect x="14" y="9" width="1" height="1" fill-opacity="0.17"/><rect x="15" y="9" width="1" height="1" fill-opacity="0.08"/><rect x="16" y="9" width="1" height="1" fill-opacity="0.67"/><rect x="17" y="9" width="1" height="1" fill-opacity="0.50"/><rect x="18" y="9" width="1" height="1" fill-opacity="0.33"/><rect x="19" y="9" width="1" height="1" fill-opacity="0.75"/><rect x="20" y="9" width="1" height="1" fill-opacity="0.42"/><rect x="21" y="9" width="1" height="1" fill-opacity="0.83"/><rect x="22" y="9" width="1" height="1" fill-opacity="0.25"/><rect x="23" y="9" width="1" height="1" fill-opacity="0.08"/><rect x="24" y="9" width="1" height="1" fill-opacity="0.42"/><rect x="25" y="9" width="1" height="1" fill-opacity="0.92"/><rect x="26" y="9" width="1" height="1" fill-opacity="0.50"/><rect x="35" y="9" width="1" height="1" fill-opacity="0.17"/><rect x="36" y="9" width="2" height="1" fill-opacity="0.08"/><rect x="38" y="9" width="1" height="1" fill-opacity="0.83"/><rect x="39" y="9" width="1" height="1" fill-opacity="0.67"/><rect x="40" y="9" width="1" height="1" fill-opacity="0.25"/><rect x="41" y="9" width="2" height="1" fill-opacity="0.75"/><rect x="43" y="9" width="1" height="1" fill-opacity="0.17"/><rect x="44" y="9" width="1" height="1" fill-opacity="0.42"/><rect x="45" y="9" width="1" height="1" fill-opacity="0.92"/><rect x="46" y="9" width="1" height="1" fill-opacity="0.33"/><rect x="48" y="9" width="1" height="1" fill-opacity="0.25"/><rect x="49" y="9" width="1" height="1" fill-opacity="0.67"/><rect x="50" y="9" width="1" height="1" fill-opacity="0.83"/><rect x="51" y="9" width="1" height="1" fill-opacity="0.17"/><rect x="57" y="9" width="1" height="1" fill-opacity="0.50"/><rect x="58" y="9" width="1" height="1" fill-opacity="0.17"/><rect x="62" y="9" width="1" height="1" fill-opacity="0.08"/><rect x="63" y="9" width="1" height="1" fill-opacity="0.17"/><rect x="65" y="9" width="1" height="1" fill-opacity="0.42"/><rect x="66" y="9" width="1" height="1" fill-opacity="0.92"/><rect x="67" y="9" width="1" height="1" fill-opacity="0.33"/><rect x="68" y="9" width="1" height="1" fill-opacity="0.08"/><rect x="69" y="9" width="1" height="1" fill-opacity="0.42"/><rect x="70" y="9" width="1" height="1" fill-opacity="0.92"/><rect x="71" y="9" width="1" height="1" fill-opacity="0.75"/><rect x="72" y="9" width="1" height="1" fill-opacity="0.08"/><rect x="73" y="9" width="1" height="1" fill-opacity="0.17"/><rect x="74" y="9" width="1" height="1" fill-opacity="0.83"/><rect x="75" y="9" width="1" height="1" fill-opacity="0.33"/><rect x="76" y="9" width="1" height="1" fill-opacity="0.50"/><rect x="77" y="9" width="1" height="1" fill-opacity="0.67"/><rect x="78" y="9" width="1" height="1" fill-opacity="0.33"/><rect x="79" y="9" width="1" height="1" fill-opacity="0.67"/><rect x="80" y="9" width="1" height="1" fill-opacity="0.08"/><rect x="84" y="9" width="1" height="1" fill-opacity="0.08"/><rect x="85" y="9" width="1" height="1" fill-opacity="0.17"/><rect x="87" y="9" width="1" height="1" fill-opacity="0.42"/><rect x="88" y="9" width="1" height="1" fill-opacity="0.92"/><rect x="89" y="9" width="1" height="1" fill-opacity="0.33"/><rect x="90" y="9" width="1" height="1" fill-opacity="0.58"/><rect x="91" y="9" width="1" height="1" fill-opacity="0.83"/><rect x="92" y="9" width="2" height="1" fill-opacity="0.25"/><rect x="94" y="9" width="1" height="1" fill-opacity="0.92"/><rect x="95" y="9" width="1" height="1" fill-opacity="0.50"/><rect x="97" y="9" width="1" height="1" fill-opacity="0.08"/><rect x="98" y="9" width="1" height="1" fill-opacity="0.42"/><rect x="99" y="9" width="1" height="1" fill-opacity="0.92"/><rect x="100" y="9" width="1" height="1" fill-opacity="0.50"/><rect x="106" y="9" width="1" height="1" fill-opacity="0.17"/><rect x="107" y="9" width="1" height="1" fill-opacity="0.42"/><rect x="1" y="10" width="1" height="1" fill-opacity="0.17"/><rect x="2" y="10" width="1" height="1" fill-opacity="0.33"/><rect x="8" y="10" width="1" height="1" fill-opacity="0.08"/><rect x="9" y="10" width="1" height="1" fill-opacity="0.33"/><rect x="13" y="10" width="1" height="1" fill-opacity="0.50"/><rect x="14" y="10" width="1" height="1" fill-opacity="0.83"/><rect x="15" y="10" width="1" height="1" fill-opacity="1.00"/><rect x="16" y="10" width="1" height="1" fill-opacity="0.75"/><rect x="17" y="10" width="1" height="1" fill-opacity="0.83"/><rect x="18" y="10" width="1" height="1" fill-opacity="1.00"/><rect x="19" y="10" width="1" height="1" fill-opacity="0.83"/><rect x="20" y="10" width="1" height="1" fill-opacity="1.00"/><rect x="21" y="10" width="1" height="1" fill-opacity="0.83"/><rect x="22" y="10" width="1" height="1" fill-opacity="0.92"/><rect x="23" y="10" width="1" height="1" fill-opacity="1.00"/><rect x="24" y="10" width="1" height="1" fill-opacity="0.75"/><rect x="25" y="10" width="1" height="1" fill-opacity="0.25"/><rect x="35" y="10" width="1" height="1" fill-opacity="0.42"/><rect x="36" y="10" width="2" height="1" fill-opacity="1.00"/><rect x="38" y="10" width="1" height="1" fill-opacity="0.83"/><rect x="39" y="10" width="1" height="1" fill-opacity="1.00"/><rect x="40" y="10" width="1" height="1" fill-opacity="0.92"/><rect x="41" y="10" width="1" height="1" fill-opacity="0.67"/><rect x="42" y="10" width="1" height="1" fill-opacity="0.50"/><rect x="43" y="10" width="1" height="1" fill-opacity="1.00"/><rect x="44" y="10" width="1" height="1" fill-opacity="0.92"/><rect x="45" y="10" width="1" height="1" fill-opacity="0.58"/><rect x="46" y="10" width="1" height="1" fill-opacity="0.92"/><rect x="47" y="10" width="1" height="1" fill-opacity="1.00"/><rect x="48" y="10" width="1" height="1" fill-opacity="0.92"/><rect x="49" y="10" width="1" height="1" fill-opacity="0.58"/><rect x="50" y="10" width="1" height="1" fill-opacity="0.08"/><rect x="57" y="10" width="1" height="1" fill-opacity="0.33"/><rect x="58" y="10" width="1" height="1" fill-opacity="0.08"/><rect x="62" y="10" width="1" height="1" fill-opacity="0.08"/><rect x="63" y="10" width="1" height="1" fill-opacity="0.83"/><rect x="64" y="10" width="1" height="1" fill-opacity="1.00"/><rect x="65" y="10" width="2" height="1" fill-opacity="0.92"/><rect x="67" y="10" width="2" height="1" fill-opacity="1.00"/><rect x="69" y="10" width="1" height="1" fill-opacity="0.83"/><rect x="70" y="10" width="1" height="1" fill-opacity="0.33"/><rect x="71" y="10" width="1" height="1" fill-opacity="0.75"/><rect x="72" y="10" width="2" height="1" fill-opacity="0.92"/><rect x="74" y="10" width="1" height="1" fill-opacity="0.58"/><rect x="75" y="10" width="1" height="1" fill-opacity="0.92"/><rect x="76" y="10" width="1" height="1" fill-opacity="0.83"/><rect x="77" y="10" width="1" height="1" fill-opacity="0.67"/><rect x="78" y="10" width="1" height="1" fill-opacity="1.00"/><rect x="79" y="10" width="1" height="1" fill-opacity="0.58"/><rect x="84" y="10" width="1" height="1" fill-opacity="0.08"/><rect x="85" y="10" width="1" height="1" fill-opacity="0.83"/><rect x="86" y="10" width="1" height="1" fill-opacity="1.00"/><rect x="87" y="10" width="2" height="1" fill-opacity="0.92"/><rect x="89" y="10" width="1" height="1" fill-opacity="1.00"/><rect x="90" y="10" width="1" height="1" fill-opacity="0.83"/><rect x="91" y="10" width="1" height="1" fill-opacity="0.42"/><rect x="92" y="10" width="1" height="1" fill-opacity="0.92"/><rect x="93" y="10" width="1" height="1" fill-opacity="1.00"/><rect x="94" y="10" width="1" height="1" fill-opacity="0.67"/><rect x="95" y="10" width="2" height="1" fill-opacity="0.83"/><rect x="97" y="10" width="1" height="1" fill-opacity="1.00"/><rect x="98" y="10" width="1" height="1" fill-opacity="0.75"/><rect x="99" y="10" width="1" height="1" fill-opacity="0.25"/><rect x="106" y="10" width="1" height="1" fill-opacity="0.17"/><rect x="107" y="10" width="1" height="1" fill-opacity="0.25"/><rect x="1" y="11" width="1" height="1" fill-opacity="0.17"/><rect x="2" y="11" width="1" height="1" fill-opacity="0.58"/><rect x="8" y="11" width="2" height="1" fill-opacity="0.25"/><rect x="57" y="11" width="1" height="1" fill-opacity="0.08"/><rect x="1" y="12" width="1" height="1" fill-opacity="0.08"/><rect x="2" y="12" width="1" height="1" fill-opacity="0.75"/><rect x="3" y="12" width="1" height="1" fill-opacity="0.50"/><rect x="4" y="12" width="1" height="1" fill-opacity="0.08"/><rect x="7" y="12" width="1" height="1" fill-opacity="0.33"/><rect x="8" y="12" width="1" height="1" fill-opacity="0.67"/><rect x="9" y="12" width="1" height="1" fill-opacity="0.08"/><rect x="11" y="12" width="1" height="1" fill-opacity="0.25"/><rect x="12" y="12" width="1" height="1" fill-opacity="0.33"/><rect x="13" y="12" width="1" height="1" fill-opacity="0.50"/><rect x="68" y="12" width="1" height="1" fill-opacity="0.08"/><rect x="69" y="12" width="1" height="1" fill-opacity="0.42"/><rect x="70" y="12" width="2" height="1" fill-opacity="0.50"/><rect x="2" y="13" width="1" height="1" fill-opacity="0.33"/><rect x="3" y="13" width="1" height="1" fill-opacity="0.92"/><rect x="4" y="13" width="3" height="1" fill-opacity="1.00"/><rect x="7" y="13" width="1" height="1" fill-opacity="0.83"/><rect x="8" y="13" width="1" height="1" fill-opacity="0.17"/><rect x="10" y="13" width="1" height="1" fill-opacity="0.08"/><rect x="11" y="13" width="1" height="1" fill-opacity="0.67"/><rect x="12" y="13" width="2" height="1" fill-opacity="0.33"/><rect x="68" y="13" width="1" height="1" fill-opacity="0.08"/><rect x="69" y="13" width="1" height="1" fill-opacity="0.42"/><rect x="70" y="13" width="2" height="1" fill-opacity="0.17"/><rect x="4" y="14" width="1" height="1" fill-opacity="0.17"/><rect x="5" y="14" width="1" height="1" fill-opacity="0.25"/><rect x="6" y="14" width="1" height="1" fill-opacity="0.08"/></svg>
<div style="position:absolute;left:494.5px;top:454.5px;width:250.0px;height:48.5px;overflow:hidden"><div style="position:absolute;left:10.2px;top:17.40px;font-size:15.3px;line-height:15.3px;color:#333;white-space:nowrap;transform:scaleX(0.884);transform-origin:0 0">AHMED SAYED AHMED HUSSIEN</div></div>
<div style="position:absolute;left:744.5px;top:454.5px;width:250.0px;height:48.5px;overflow:hidden"><div style="position:absolute;left:10.2px;top:17.40px;font-size:15.3px;line-height:15.3px;color:#333;white-space:nowrap;transform:scaleX(0.884);transform-origin:0 0">AHMED SAYED AHMED HUSSIEN</div></div>
<div style="position:absolute;left:994.5px;top:454.5px;width:250.0px;height:48.5px;overflow:hidden"><div style="position:absolute;left:10.2px;top:17.40px;font-size:15.3px;line-height:15.3px;color:#333;white-space:nowrap;">Top management</div></div>
<div style="position:absolute;left:1244.5px;top:454.5px;width:250.0px;height:48.5px;overflow:hidden"><div style="position:absolute;left:10.2px;top:17.40px;font-size:15.3px;line-height:15.3px;color:#333;white-space:nowrap;">top management</div></div>
<div style="position:absolute;left:1494.5px;top:454.5px;width:250.0px;height:48.5px;overflow:hidden"><div style="position:absolute;left:10.2px;top:17.40px;font-size:15.3px;line-height:15.3px;color:#333;white-space:nowrap;">White collar</div></div>
<div style="position:absolute;left:1744.5px;top:454.5px;width:65.5px;height:48.5px;overflow:hidden"><div style="position:absolute;left:10.2px;top:17.40px;font-size:15.3px;line-height:15.3px;color:#333;white-space:nowrap;transform:scaleX(0.85);transform-origin:0 0">CEO</div></div>
<div style="position:absolute;left:57px;top:503px;width:187.5px;height:47.5px;overflow:hidden"><div style="position:absolute;left:10px;top:16.90px;font-size:15.3px;line-height:15.3px;color:#333;white-space:nowrap;">3</div></div>
<svg style="position:absolute;left:253px;top:520px" width="72" height="16" fill="#333" shape-rendering="crispEdges"><rect x="32" y="1" width="1" height="1" fill-opacity="0.08"/><rect x="33" y="1" width="1" height="1" fill-opacity="0.33"/><rect x="36" y="1" width="2" height="1" fill-opacity="0.25"/><rect x="53" y="1" width="1" height="1" fill-opacity="0.25"/><rect x="54" y="1" width="1" height="1" fill-opacity="0.17"/><rect x="10" y="2" width="1" height="1" fill-opacity="0.17"/><rect x="11" y="2" width="1" height="1" fill-opacity="0.67"/><rect x="12" y="2" width="1" height="1" fill-opacity="0.08"/><rect x="32" y="2" width="1" height="1" fill-opacity="0.33"/><rect x="33" y="2" width="1" height="1" fill-opacity="0.92"/><rect x="34" y="2" width="1" height="1" fill-opacity="0.25"/><rect x="36" y="2" width="1" height="1" fill-opacity="0.50"/><rect x="37" y="2" width="1" height="1" fill-opacity="0.33"/><rect x="53" y="2" width="1" height="1" fill-opacity="0.50"/><rect x="54" y="2" width="1" height="1" fill-opacity="0.33"/><rect x="11" y="3" width="1" height="1" fill-opacity="0.17"/><rect x="32" y="3" width="1" height="1" fill-opacity="0.25"/><rect x="33" y="3" width="1" height="1" fill-opacity="0.92"/><rect x="34" y="3" width="1" height="1" fill-opacity="0.33"/><rect x="36" y="3" width="2" height="1" fill-opacity="0.42"/><rect x="42" y="3" width="1" height="1" fill-opacity="0.08"/><rect x="43" y="3" width="1" height="1" fill-opacity="0.42"/><rect x="44" y="3" width="1" height="1" fill-opacity="0.50"/><rect x="45" y="3" width="1" height="1" fill-opacity="0.75"/><rect x="46" y="3" width="1" height="1" fill-opacity="0.08"/><rect x="53" y="3" width="2" height="1" fill-opacity="0.42"/><rect x="27" y="4" width="1" height="1" fill-opacity="0.08"/><rect x="28" y="4" width="1" height="1" fill-opacity="0.17"/><rect x="32" y="4" width="1" height="1" fill-opacity="0.08"/><rect x="33" y="4" width="1" height="1" fill-opacity="0.67"/><rect x="34" y="4" width="1" height="1" fill-opacity="0.08"/><rect x="36" y="4" width="1" height="1" fill-opacity="0.33"/><rect x="37" y="4" width="1" height="1" fill-opacity="0.50"/><rect x="43" y="4" width="1" height="1" fill-opacity="0.42"/><rect x="44" y="4" width="2" height="1" fill-opacity="0.17"/><rect x="53" y="4" width="1" height="1" fill-opacity="0.33"/><rect x="54" y="4" width="1" height="1" fill-opacity="0.42"/><rect x="10" y="5" width="1" height="1" fill-opacity="0.25"/><rect x="11" y="5" width="1" height="1" fill-opacity="0.83"/><rect x="12" y="5" width="1" height="1" fill-opacity="0.50"/><rect x="27" y="5" width="1" height="1" fill-opacity="0.33"/><rect x="28" y="5" width="1" height="1" fill-opacity="0.67"/><rect x="29" y="5" width="1" height="1" fill-opacity="0.17"/><rect x="33" y="5" width="1" height="1" fill-opacity="0.58"/><rect x="34" y="5" width="1" height="1" fill-opacity="0.17"/><rect x="36" y="5" width="1" height="1" fill-opacity="0.25"/><rect x="37" y="5" width="1" height="1" fill-opacity="0.58"/><rect x="44" y="5" width="1" height="1" fill-opacity="0.08"/><rect x="53" y="5" width="1" height="1" fill-opacity="0.25"/><rect x="54" y="5" width="1" height="1" fill-opacity="0.50"/><rect x="9" y="6" width="1" height="1" fill-opacity="0.08"/><rect x="10" y="6" width="1" height="1" fill-opacity="0.75"/><rect x="11" y="6" width="1" height="1" fill-opacity="0.67"/><rect x="12" y="6" width="1" height="1" fill-opacity="0.75"/><rect x="13" y="6" width="1" height="1" fill-opacity="0.08"/><rect x="16" y="6" width="2" height="1" fill-opacity="0.08"/><rect x="26" y="6" width="1" height="1" fill-opacity="0.33"/><rect x="27" y="6" width="1" height="1" fill-opacity="0.67"/><rect x="28" y="6" width="1" height="1" fill-opacity="0.33"/><rect x="29" y="6" width="1" height="1" fill-opacity="0.75"/><rect x="30" y="6" width="1" height="1" fill-opacity="0.08"/><rect x="33" y="6" width="1" height="1" fill-opacity="0.50"/><rect x="34" y="6" width="1" height="1" fill-opacity="0.25"/><rect x="36" y="6" width="1" height="1" fill-opacity="0.25"/><rect x="37" y="6" width="1" height="1" fill-opacity="0.58"/><rect x="43" y="6" width="1" height="1" fill-opacity="0.25"/><rect x="44" y="6" width="1" height="1" fill-opacity="0.83"/><rect x="45" y="6" width="1" height="1" fill-opacity="0.25"/><rect x="49" y="6" width="1" height="1" fill-opacity="0.25"/><rect x="50" y="6" width="1" height="1" fill-opacity="0.50"/><rect x="53" y="6" width="1" height="1" fill-opacity="0.25"/><rect x="54" y="6" width="1" height="1" fill-opacity="0.50"/><rect x="63" y="6" width="1" height="1" fill-opacity="0.33"/><rect x="64" y="6" width="1" height="1" fill-opacity="0.83"/><rect x="65" y="6" width="1" height="1" fill-opacity="0.92"/><rect x="66" y="6" width="1" height="1" fill-opacity="0.75"/><rect x="67" y="6" width="1" height="1" fill-opacity="0.42"/><rect x="68" y="6" width="1" height="1" fill-opacity="0.17"/><rect x="1" y="7" width="1" height="1" fill-opacity="0.08"/><rect x="2" y="7" width="1" height="1" fill-opacity="0.33"/><rect x="9" y="7" width="1" height="1" fill-opacity="0.25"/><rect x="10" y="7" width="1" height="1" fill-opacity="0.50"/><rect x="11" y="7" width="1" height="1" fill-opacity="0.08"/><rect x="12" y="7" width="1" height="1" fill-opacity="0.58"/><rect x="13" y="7" width="1" height="1" fill-opacity="0.08"/><rect x="16" y="7" width="1" height="1" fill-opacity="0.50"/><rect x="17" y="7" width="1" height="1" fill-opacity="0.42"/><rect x="33" y="7" width="1" height="1" fill-opacity="0.42"/><rect x="34" y="7" width="1" height="1" fill-opacity="0.33"/><rect x="36" y="7" width="1" height="1" fill-opacity="0.17"/><rect x="37" y="7" width="1" height="1" fill-opacity="0.58"/><rect x="43" y="7" width="1" height="1" fill-opacity="0.50"/><rect x="44" y="7" width="1" height="1" fill-opacity="0.67"/><rect x="45" y="7" width="1" height="1" fill-opacity="0.75"/><rect x="46" y="7" width="1" height="1" fill-opacity="0.08"/><rect x="49" y="7" width="1" height="1" fill-opacity="0.17"/><rect x="50" y="7" width="1" height="1" fill-opacity="0.75"/><rect x="51" y="7" width="1" height="1" fill-opacity="0.42"/><rect x="53" y="7" width="1" height="1" fill-opacity="0.25"/><rect x="54" y="7" width="1" height="1" fill-opacity="0.50"/><rect x="58" y="7" width="1" height="1" fill-opacity="0.08"/><rect x="59" y="7" width="1" height="1" fill-opacity="0.33"/><rect x="60" y="7" width="1" height="1" fill-opacity="0.08"/><rect x="66" y="7" width="1" height="1" fill-opacity="0.33"/><rect x="67" y="7" width="1" height="1" fill-opacity="0.83"/><rect x="68" y="7" width="2" height="1" fill-opacity="1.00"/><rect x="70" y="7" width="1" height="1" fill-opacity="0.83"/><rect x="71" y="7" width="1" height="1" fill-opacity="0.08"/><rect x="1" y="8" width="1" height="1" fill-opacity="0.17"/><rect x="2" y="8" width="1" height="1" fill-opacity="0.33"/><rect x="9" y="8" width="1" height="1" fill-opacity="0.17"/><rect x="10" y="8" width="1" height="1" fill-opacity="0.75"/><rect x="11" y="8" width="1" height="1" fill-opacity="0.42"/><rect x="12" y="8" width="1" height="1" fill-opacity="0.58"/><rect x="13" y="8" width="1" height="1" fill-opacity="0.08"/><rect x="16" y="8" width="1" height="1" fill-opacity="0.25"/><rect x="17" y="8" width="1" height="1" fill-opacity="0.58"/><rect x="21" y="8" width="1" height="1" fill-opacity="0.08"/><rect x="22" y="8" width="1" height="1" fill-opacity="0.42"/><rect x="23" y="8" width="1" height="1" fill-opacity="0.08"/><rect x="25" y="8" width="1" height="1" fill-opacity="0.08"/><rect x="27" y="8" width="2" height="1" fill-opacity="0.08"/><rect x="29" y="8" width="1" height="1" fill-opacity="0.17"/><rect x="30" y="8" width="1" height="1" fill-opacity="0.33"/><rect x="33" y="8" width="1" height="1" fill-opacity="0.42"/><rect x="34" y="8" width="1" height="1" fill-opacity="0.33"/><rect x="36" y="8" width="1" height="1" fill-opacity="0.17"/><rect x="37" y="8" width="1" height="1" fill-opacity="0.50"/><rect x="42" y="8" width="1" height="1" fill-opacity="0.17"/><rect x="43" y="8" width="1" height="1" fill-opacity="0.33"/><rect x="44" y="8" width="1" height="1" fill-opacity="0.08"/><rect x="45" y="8" width="1" height="1" fill-opacity="0.50"/><rect x="46" y="8" width="1" height="1" fill-opacity="0.33"/><rect x="50" y="8" width="1" height="1" fill-opacity="0.17"/><rect x="51" y="8" width="1" height="1" fill-opacity="0.67"/><rect x="52" y="8" width="2" height="1" fill-opacity="0.17"/><rect x="54" y="8" width="1" height="1" fill-opacity="0.58"/><rect x="57" y="8" width="1" height="1" fill-opacity="0.33"/><rect x="58" y="8" width="1" height="1" fill-opacity="0.58"/><rect x="59" y="8" width="1" height="1" fill-opacity="0.75"/><rect x="60" y="8" width="1" height="1" fill-opacity="0.67"/><rect x="61" y="8" width="1" height="1" fill-opacity="0.08"/><rect x="65" y="8" width="1" height="1" fill-opacity="0.17"/><rect x="66" y="8" width="2" height="1" fill-opacity="0.75"/><rect x="68" y="8" width="1" height="1" fill-opacity="0.33"/><rect x="69" y="8" width="1" height="1" fill-opacity="0.17"/><rect x="1" y="9" width="1" height="1" fill-opacity="0.17"/><rect x="2" y="9" width="1" height="1" fill-opacity="0.75"/><rect x="3" y="9" width="1" height="1" fill-opacity="0.33"/><rect x="4" y="9" width="1" height="1" fill-opacity="0.08"/><rect x="9" y="9" width="1" height="1" fill-opacity="0.08"/><rect x="10" y="9" width="1" height="1" fill-opacity="0.67"/><rect x="11" y="9" width="1" height="1" fill-opacity="1.00"/><rect x="12" y="9" width="1" height="1" fill-opacity="0.67"/><rect x="13" y="9" width="1" height="1" fill-opacity="0.17"/><rect x="16" y="9" width="1" height="1" fill-opacity="0.17"/><rect x="17" y="9" width="1" height="1" fill-opacity="0.42"/><rect x="21" y="9" width="1" height="1" fill-opacity="0.17"/><rect x="22" y="9" width="1" height="1" fill-opacity="0.83"/><rect x="23" y="9" width="1" height="1" fill-opacity="0.33"/><rect x="24" y="9" width="1" height="1" fill-opacity="0.17"/><rect x="25" y="9" width="1" height="1" fill-opacity="0.75"/><rect x="26" y="9" width="1" height="1" fill-opacity="0.33"/><rect x="27" y="9" width="1" height="1" fill-opacity="0.50"/><rect x="28" y="9" width="1" height="1" fill-opacity="0.67"/><rect x="29" y="9" width="1" height="1" fill-opacity="0.50"/><rect x="30" y="9" width="1" height="1" fill-opacity="0.83"/><rect x="31" y="9" width="1" height="1" fill-opacity="0.08"/><rect x="32" y="9" width="1" height="1" fill-opacity="0.25"/><rect x="33" y="9" width="1" height="1" fill-opacity="0.75"/><rect x="34" y="9" width="1" height="1" fill-opacity="0.25"/><rect x="36" y="9" width="1" height="1" fill-opacity="0.17"/><rect x="37" y="9" width="1" height="1" fill-opacity="0.42"/><rect x="42" y="9" width="2" height="1" fill-opacity="0.33"/><rect x="45" y="9" width="1" height="1" fill-opacity="0.25"/><rect x="46" y="9" width="1" height="1" fill-opacity="0.42"/><rect x="47" y="9" width="1" height="1" fill-opacity="0.08"/><rect x="48" y="9" width="1" height="1" fill-opacity="0.17"/><rect x="51" y="9" width="1" height="1" fill-opacity="0.33"/><rect x="52" y="9" width="1" height="1" fill-opacity="0.25"/><rect x="53" y="9" width="1" height="1" fill-opacity="0.08"/><rect x="54" y="9" width="1" height="1" fill-opacity="0.75"/><rect x="55" y="9" width="1" height="1" fill-opacity="0.33"/><rect x="56" y="9" width="1" height="1" fill-opacity="0.58"/><rect x="57" y="9" width="1" height="1" fill-opacity="0.83"/><rect x="58" y="9" width="2" height="1" fill-opacity="0.25"/><rect x="60" y="9" width="1" height="1" fill-opacity="0.92"/><rect x="61" y="9" width="1" height="1" fill-opacity="0.50"/><rect x="63" y="9" width="1" height="1" fill-opacity="0.08"/><rect x="64" y="9" width="1" height="1" fill-opacity="0.42"/><rect x="65" y="9" width="1" height="1" fill-opacity="0.92"/><rect x="66" y="9" width="1" height="1" fill-opacity="0.50"/><rect x="2" y="10" width="1" height="1" fill-opacity="0.42"/><rect x="3" y="10" width="1" height="1" fill-opacity="0.92"/><rect x="4" y="10" width="6" height="1" fill-opacity="1.00"/><rect x="10" y="10" width="1" height="1" fill-opacity="0.75"/><rect x="11" y="10" width="1" height="1" fill-opacity="0.42"/><rect x="12" y="10" width="1" height="1" fill-opacity="0.67"/><rect x="13" y="10" width="2" height="1" fill-opacity="0.92"/><rect x="15" y="10" width="2" height="1" fill-opacity="1.00"/><rect x="17" y="10" width="1" height="1" fill-opacity="0.33"/><rect x="21" y="10" width="1" height="1" fill-opacity="0.08"/><rect x="22" y="10" width="1" height="1" fill-opacity="0.75"/><rect x="23" y="10" width="2" height="1" fill-opacity="1.00"/><rect x="25" y="10" width="1" height="1" fill-opacity="0.67"/><rect x="26" y="10" width="1" height="1" fill-opacity="0.92"/><rect x="27" y="10" width="1" height="1" fill-opacity="1.00"/><rect x="28" y="10" width="1" height="1" fill-opacity="0.92"/><rect x="29" y="10" width="1" height="1" fill-opacity="1.00"/><rect x="30" y="10" width="2" height="1" fill-opacity="0.92"/><rect x="32" y="10" width="1" height="1" fill-opacity="1.00"/><rect x="33" y="10" width="1" height="1" fill-opacity="0.67"/><rect x="36" y="10" width="1" height="1" fill-opacity="0.17"/><rect x="37" y="10" width="1" height="1" fill-opacity="0.25"/><rect x="42" y="10" width="1" height="1" fill-opacity="0.17"/><rect x="43" y="10" width="1" height="1" fill-opacity="0.83"/><rect x="44" y="10" width="1" height="1" fill-opacity="1.00"/><rect x="45" y="10" width="1" height="1" fill-opacity="0.83"/><rect x="46" y="10" width="1" height="1" fill-opacity="0.17"/><rect x="47" y="10" width="1" height="1" fill-opacity="0.08"/><rect x="48" y="10" width="1" height="1" fill-opacity="0.83"/><rect x="49" y="10" width="2" height="1" fill-opacity="1.00"/><rect x="51" y="10" width="1" height="1" fill-opacity="0.83"/><rect x="52" y="10" width="1" height="1" fill-opacity="0.08"/><rect x="54" y="10" width="1" height="1" fill-opacity="0.33"/><rect x="55" y="10" width="1" height="1" fill-opacity="0.83"/><rect x="56" y="10" width="1" height="1" fill-opacity="0.75"/><rect x="57" y="10" width="1" height="1" fill-opacity="0.42"/><rect x="58" y="10" width="1" height="1" fill-opacity="0.92"/><rect x="59" y="10" width="1" height="1" fill-opacity="1.00"/><rect x="60" y="10" width="1" height="1" fill-opacity="0.67"/><rect x="61" y="10" width="2" height="1" fill-opacity="0.83"/><rect x="63" y="10" width="1" height="1" fill-opacity="1.00"/><rect x="64" y="10" width="1" height="1" fill-opacity="0.75"/><rect x="65" y="10" width="1" height="1" fill-opacity="0.25"/><rect x="21" y="11" width="1" height="1" fill-opacity="0.25"/><rect x="22" y="11" width="1" height="1" fill-opacity="0.50"/><rect x="14" y="12" width="1" height="1" fill-opacity="0.17"/><rect x="15" y="12" width="1" height="1" fill-opacity="0.42"/><rect x="16" y="12" width="1" height="1" fill-opacity="0.58"/><rect x="17" y="12" width="1" height="1" fill-opacity="0.42"/><rect x="20" y="12" width="1" height="1" fill-opacity="0.25"/><rect x="21" y="12" width="1" height="1" fill-opacity="0.83"/><rect x="22" y="12" width="1" height="1" fill-opacity="0.33"/><rect x="14" y="13" width="1" height="1" fill-opacity="0.17"/><rect x="15" y="13" width="1" height="1" fill-opacity="0.42"/><rect x="16" y="13" width="1" height="1" fill-opacity="0.17"/><rect x="17" y="13" width="1" height="1" fill-opacity="0.08"/><rect x="18" y="13" width="1" height="1" fill-opacity="0.17"/><rect x="19" y="13" width="1" height="1" fill-opacity="0.58"/><rect x="20" y="13" width="1" height="1" fill-opacity="0.92"/><rect x="21" y="13" width="1" height="1" fill-opacity="0.50"/><rect x="17" y="14" width="1" height="1" fill-opacity="0.08"/><rect x="18" y="14" width="1" height="1" fill-opacity="0.58"/><rect x="19" y="14" width="1" height="1" fill-opacity="0.67"/><rect x="20" y="14" width="1" height="1" fill-opacity="0.25"/></svg>
<div style="position:absolute;left:494.5px;top:503px;width:250.0px;height:47.5px;overflow:hidden"><div style="position:absolute;left:10.2px;top:16.90px;font-size:15.3px;line-height:15.3px;color:#333;white-space:nowrap;">Hamada</div></div>
<div style="position:absolute;left:744.5px;top:503px;width:250.0px;height:47.5px;overflow:hidden"><div style="position:absolute;left:10.2px;top:16.90px;font-size:15.3px;line-height:15.3px;color:#333;white-space:nowrap;">Hamada</div></div>
<div style="position:absolute;left:994.5px;top:503px;width:250.0px;height:47.5px;overflow:hidden"><div style="position:absolute;left:10.2px;top:16.90px;font-size:15.3px;line-height:15.3px;color:#333;white-space:nowrap;">Business development</div></div>
<div style="position:absolute;left:1244.5px;top:503px;width:250.0px;height:47.5px;overflow:hidden"><div style="position:absolute;left:10.2px;top:16.90px;font-size:15.3px;line-height:15.3px;color:#333;white-space:nowrap;">Sales unit</div></div>
<div style="position:absolute;left:1744.5px;top:503px;width:65.5px;height:47.5px;overflow:hidden"><div style="position:absolute;left:10.2px;top:16.90px;font-size:15.3px;line-height:15.3px;color:#333;white-space:nowrap;">Junior sales</div></div>
<div style="position:absolute;left:57px;top:550.5px;width:187.5px;height:65.5px;overflow:hidden"><div style="position:absolute;left:10px;top:25.90px;font-size:15.3px;line-height:15.3px;color:#333;white-space:nowrap;">4</div></div>
<svg style="position:absolute;left:253px;top:581px" width="23" height="11" fill="#333" shape-rendering="crispEdges"><rect x="13" y="1" width="1" height="1" fill-opacity="0.08"/><rect x="14" y="1" width="1" height="1" fill-opacity="0.33"/><rect x="3" y="2" width="1" height="1" fill-opacity="0.42"/><rect x="4" y="2" width="1" height="1" fill-opacity="0.83"/><rect x="5" y="2" width="1" height="1" fill-opacity="0.33"/><rect x="10" y="2" width="3" height="1" fill-opacity="0.08"/><rect x="13" y="2" width="1" height="1" fill-opacity="0.58"/><rect x="14" y="2" width="1" height="1" fill-opacity="0.75"/><rect x="15" y="2" width="1" height="1" fill-opacity="0.08"/><rect x="18" y="2" width="1" height="1" fill-opacity="0.17"/><rect x="19" y="2" width="1" height="1" fill-opacity="0.58"/><rect x="20" y="2" width="1" height="1" fill-opacity="0.42"/><rect x="2" y="3" width="1" height="1" fill-opacity="0.17"/><rect x="3" y="3" width="1" height="1" fill-opacity="0.58"/><rect x="4" y="3" width="1" height="1" fill-opacity="0.33"/><rect x="5" y="3" width="1" height="1" fill-opacity="0.67"/><rect x="6" y="3" width="1" height="1" fill-opacity="0.08"/><rect x="10" y="3" width="1" height="1" fill-opacity="0.58"/><rect x="11" y="3" width="2" height="1" fill-opacity="1.00"/><rect x="13" y="3" width="1" height="1" fill-opacity="0.42"/><rect x="14" y="3" width="1" height="1" fill-opacity="0.67"/><rect x="15" y="3" width="1" height="1" fill-opacity="0.42"/><rect x="17" y="3" width="1" height="1" fill-opacity="0.25"/><rect x="18" y="3" width="1" height="1" fill-opacity="0.75"/><rect x="19" y="3" width="1" height="1" fill-opacity="0.50"/><rect x="20" y="3" width="1" height="1" fill-opacity="0.83"/><rect x="21" y="3" width="1" height="1" fill-opacity="0.33"/><rect x="2" y="4" width="1" height="1" fill-opacity="0.17"/><rect x="3" y="4" width="1" height="1" fill-opacity="0.58"/><rect x="4" y="4" width="1" height="1" fill-opacity="0.33"/><rect x="5" y="4" width="1" height="1" fill-opacity="0.58"/><rect x="6" y="4" width="1" height="1" fill-opacity="0.08"/><rect x="10" y="4" width="2" height="1" fill-opacity="0.50"/><rect x="12" y="4" width="1" height="1" fill-opacity="0.08"/><rect x="14" y="4" width="1" height="1" fill-opacity="0.33"/><rect x="15" y="4" width="1" height="1" fill-opacity="0.83"/><rect x="16" y="4" width="1" height="1" fill-opacity="0.42"/><rect x="17" y="4" width="1" height="1" fill-opacity="0.83"/><rect x="18" y="4" width="1" height="1" fill-opacity="0.75"/><rect x="19" y="4" width="1" height="1" fill-opacity="0.42"/><rect x="20" y="4" width="2" height="1" fill-opacity="0.50"/><rect x="2" y="5" width="1" height="1" fill-opacity="0.17"/><rect x="3" y="5" width="1" height="1" fill-opacity="0.83"/><rect x="4" y="5" width="1" height="1" fill-opacity="1.00"/><rect x="5" y="5" width="1" height="1" fill-opacity="0.75"/><rect x="6" y="5" width="1" height="1" fill-opacity="0.08"/><rect x="10" y="5" width="2" height="1" fill-opacity="0.33"/><rect x="14" y="5" width="1" height="1" fill-opacity="0.08"/><rect x="15" y="5" width="1" height="1" fill-opacity="0.67"/><rect x="16" y="5" width="1" height="1" fill-opacity="0.92"/><rect x="17" y="5" width="1" height="1" fill-opacity="0.25"/><rect x="18" y="5" width="1" height="1" fill-opacity="0.50"/><rect x="19" y="5" width="1" height="1" fill-opacity="1.00"/><rect x="20" y="5" width="1" height="1" fill-opacity="0.83"/><rect x="21" y="5" width="1" height="1" fill-opacity="0.17"/><rect x="4" y="6" width="1" height="1" fill-opacity="0.25"/><rect x="5" y="6" width="1" height="1" fill-opacity="0.67"/><rect x="6" y="6" width="1" height="1" fill-opacity="0.08"/><rect x="9" y="6" width="1" height="1" fill-opacity="0.08"/><rect x="10" y="6" width="1" height="1" fill-opacity="0.67"/><rect x="11" y="6" width="1" height="1" fill-opacity="0.25"/><rect x="3" y="7" width="1" height="1" fill-opacity="0.17"/><rect x="4" y="7" width="1" height="1" fill-opacity="0.83"/><rect x="5" y="7" width="1" height="1" fill-opacity="0.42"/><rect x="8" y="7" width="1" height="1" fill-opacity="0.08"/><rect x="9" y="7" width="1" height="1" fill-opacity="0.67"/><rect x="10" y="7" width="1" height="1" fill-opacity="0.75"/><rect x="11" y="7" width="2" height="1" fill-opacity="0.08"/><rect x="13" y="7" width="1" height="1" fill-opacity="0.42"/><rect x="14" y="7" width="1" height="1" fill-opacity="0.50"/><rect x="15" y="7" width="1" height="1" fill-opacity="0.58"/><rect x="1" y="8" width="1" height="1" fill-opacity="0.08"/><rect x="2" y="8" width="1" height="1" fill-opacity="0.42"/><rect x="3" y="8" width="1" height="1" fill-opacity="0.92"/><rect x="4" y="8" width="1" height="1" fill-opacity="0.67"/><rect x="5" y="8" width="1" height="1" fill-opacity="0.08"/><rect x="7" y="8" width="1" height="1" fill-opacity="0.33"/><rect x="8" y="8" width="1" height="1" fill-opacity="0.83"/><rect x="9" y="8" width="1" height="1" fill-opacity="0.92"/><rect x="10" y="8" width="1" height="1" fill-opacity="0.25"/><rect x="12" y="8" width="1" height="1" fill-opacity="0.08"/><rect x="13" y="8" width="1" height="1" fill-opacity="0.42"/><rect x="14" y="8" width="2" height="1" fill-opacity="0.17"/><rect x="1" y="9" width="1" height="1" fill-opacity="0.25"/><rect x="2" y="9" width="1" height="1" fill-opacity="0.42"/><rect x="3" y="9" width="1" height="1" fill-opacity="0.17"/><rect x="6" y="9" width="1" height="1" fill-opacity="0.33"/><rect x="7" y="9" width="1" height="1" fill-opacity="0.67"/><rect x="8" y="9" width="1" height="1" fill-opacity="0.58"/><rect x="9" y="9" width="1" height="1" fill-opacity="0.17"/></svg>
<div style="position:absolute;left:494.5px;top:550.5px;width:250.0px;height:65.5px;overflow:hidden"><div style="position:absolute;left:10.2px;top:25.90px;font-size:15.3px;line-height:15.3px;color:#333;white-space:nowrap;">miro</div></div>
<div style="position:absolute;left:744.5px;top:550.5px;width:250.0px;height:65.5px;overflow:hidden"><div style="position:absolute;left:10.2px;top:25.90px;font-size:15.3px;line-height:15.3px;color:#333;white-space:nowrap;">miro</div></div>
<div style="position:absolute;left:994.5px;top:550.5px;width:250.0px;height:65.5px;overflow:hidden"><div style="position:absolute;left:10.2px;top:25.90px;font-size:15.3px;line-height:15.3px;color:#333;white-space:nowrap;">Operation</div></div>
<div style="position:absolute;left:1254.7px;top:558.5px;width:238.0px;font-size:15.3px;line-height:26px;color:#333">Technical support &amp; deployment<br>unit</div>
<div style="position:absolute;left:1494.5px;top:550.5px;width:250.0px;height:65.5px;overflow:hidden"><div style="position:absolute;left:10.2px;top:25.90px;font-size:15.3px;line-height:15.3px;color:#333;white-space:nowrap;">White collar</div></div>
<div style="position:absolute;left:1744.5px;top:550.5px;width:65.5px;height:65.5px;overflow:hidden"><div style="position:absolute;left:10.2px;top:25.90px;font-size:15.3px;line-height:15.3px;color:#333;white-space:nowrap;">Tech team</div></div>
<div style="position:absolute;left:57px;top:616px;width:187.5px;height:48px;overflow:hidden"><div style="position:absolute;left:10px;top:17.15px;font-size:15.3px;line-height:15.3px;color:#333;white-space:nowrap;">5</div></div>
<svg style="position:absolute;left:253px;top:631px" width="111" height="19" fill="#333" shape-rendering="crispEdges"><rect x="107" y="1" width="1" height="1" fill-opacity="0.17"/><rect x="108" y="1" width="1" height="1" fill-opacity="0.42"/><rect x="107" y="2" width="1" height="1" fill-opacity="0.50"/><rect x="108" y="2" width="1" height="1" fill-opacity="0.17"/><rect x="107" y="3" width="1" height="1" fill-opacity="0.42"/><rect x="108" y="3" width="1" height="1" fill-opacity="0.50"/><rect x="109" y="3" width="1" height="1" fill-opacity="0.08"/><rect x="107" y="4" width="1" height="1" fill-opacity="0.08"/><rect x="108" y="4" width="1" height="1" fill-opacity="0.25"/><rect x="79" y="5" width="1" height="1" fill-opacity="0.42"/><rect x="80" y="5" width="1" height="1" fill-opacity="0.17"/><rect x="107" y="5" width="1" height="1" fill-opacity="0.17"/><rect x="108" y="5" width="1" height="1" fill-opacity="0.67"/><rect x="109" y="5" width="1" height="1" fill-opacity="0.08"/><rect x="74" y="6" width="1" height="1" fill-opacity="0.17"/><rect x="75" y="6" width="1" height="1" fill-opacity="0.33"/><rect x="78" y="6" width="1" height="1" fill-opacity="0.08"/><rect x="79" y="6" width="1" height="1" fill-opacity="0.50"/><rect x="80" y="6" width="1" height="1" fill-opacity="0.25"/><rect x="107" y="6" width="1" height="1" fill-opacity="0.08"/><rect x="108" y="6" width="1" height="1" fill-opacity="0.67"/><rect x="109" y="6" width="1" height="1" fill-opacity="0.08"/><rect x="29" y="7" width="1" height="1" fill-opacity="0.17"/><rect x="30" y="7" width="1" height="1" fill-opacity="0.75"/><rect x="31" y="7" width="1" height="1" fill-opacity="0.17"/><rect x="72" y="7" width="1" height="1" fill-opacity="0.08"/><rect x="73" y="7" width="1" height="1" fill-opacity="0.67"/><rect x="74" y="7" width="1" height="1" fill-opacity="0.50"/><rect x="75" y="7" width="1" height="1" fill-opacity="0.58"/><rect x="76" y="7" width="1" height="1" fill-opacity="0.08"/><rect x="107" y="7" width="1" height="1" fill-opacity="0.08"/><rect x="108" y="7" width="1" height="1" fill-opacity="0.67"/><rect x="109" y="7" width="1" height="1" fill-opacity="0.17"/><rect x="16" y="8" width="1" height="1" fill-opacity="0.33"/><rect x="17" y="8" width="2" height="1" fill-opacity="0.92"/><rect x="19" y="8" width="1" height="1" fill-opacity="0.58"/><rect x="20" y="8" width="1" height="1" fill-opacity="0.08"/><rect x="30" y="8" width="1" height="1" fill-opacity="0.08"/><rect x="78" y="8" width="1" height="1" fill-opacity="0.17"/><rect x="79" y="8" width="1" height="1" fill-opacity="0.83"/><rect x="80" y="8" width="1" height="1" fill-opacity="0.58"/><rect x="81" y="8" width="1" height="1" fill-opacity="0.08"/><rect x="88" y="8" width="1" height="1" fill-opacity="0.17"/><rect x="108" y="8" width="1" height="1" fill-opacity="0.58"/><rect x="109" y="8" width="1" height="1" fill-opacity="0.17"/><rect x="15" y="9" width="1" height="1" fill-opacity="0.17"/><rect x="16" y="9" width="1" height="1" fill-opacity="0.75"/><rect x="17" y="9" width="1" height="1" fill-opacity="0.33"/><rect x="18" y="9" width="2" height="1" fill-opacity="0.08"/><rect x="32" y="9" width="1" height="1" fill-opacity="0.42"/><rect x="33" y="9" width="1" height="1" fill-opacity="0.33"/><rect x="42" y="9" width="1" height="1" fill-opacity="0.08"/><rect x="43" y="9" width="1" height="1" fill-opacity="0.58"/><rect x="44" y="9" width="1" height="1" fill-opacity="0.92"/><rect x="45" y="9" width="1" height="1" fill-opacity="0.83"/><rect x="46" y="9" width="1" height="1" fill-opacity="0.58"/><rect x="47" y="9" width="1" height="1" fill-opacity="0.25"/><rect x="48" y="9" width="1" height="1" fill-opacity="0.08"/><rect x="64" y="9" width="1" height="1" fill-opacity="0.17"/><rect x="65" y="9" width="1" height="1" fill-opacity="0.75"/><rect x="66" y="9" width="1" height="1" fill-opacity="0.92"/><rect x="67" y="9" width="1" height="1" fill-opacity="0.83"/><rect x="68" y="9" width="1" height="1" fill-opacity="0.50"/><rect x="69" y="9" width="1" height="1" fill-opacity="0.17"/><rect x="74" y="9" width="1" height="1" fill-opacity="0.08"/><rect x="78" y="9" width="1" height="1" fill-opacity="0.50"/><rect x="79" y="9" width="1" height="1" fill-opacity="0.67"/><rect x="80" y="9" width="1" height="1" fill-opacity="0.92"/><rect x="81" y="9" width="1" height="1" fill-opacity="0.33"/><rect x="88" y="9" width="1" height="1" fill-opacity="0.42"/><rect x="89" y="9" width="1" height="1" fill-opacity="0.17"/><rect x="98" y="9" width="1" height="1" fill-opacity="0.08"/><rect x="99" y="9" width="1" height="1" fill-opacity="0.58"/><rect x="100" y="9" width="1" height="1" fill-opacity="0.92"/><rect x="101" y="9" width="1" height="1" fill-opacity="0.83"/><rect x="102" y="9" width="1" height="1" fill-opacity="0.58"/><rect x="103" y="9" width="1" height="1" fill-opacity="0.25"/><rect x="104" y="9" width="1" height="1" fill-opacity="0.08"/><rect x="108" y="9" width="1" height="1" fill-opacity="0.58"/><rect x="109" y="9" width="1" height="1" fill-opacity="0.25"/><rect x="10" y="10" width="1" height="1" fill-opacity="0.17"/><rect x="11" y="10" width="1" height="1" fill-opacity="0.33"/><rect x="12" y="10" width="1" height="1" fill-opacity="0.08"/><rect x="15" y="10" width="2" height="1" fill-opacity="0.42"/><rect x="32" y="10" width="1" height="1" fill-opacity="0.50"/><rect x="33" y="10" width="1" height="1" fill-opacity="0.58"/><rect x="45" y="10" width="1" height="1" fill-opacity="0.17"/><rect x="46" y="10" width="1" height="1" fill-opacity="0.58"/><rect x="47" y="10" width="3" height="1" fill-opacity="1.00"/><rect x="50" y="10" width="1" height="1" fill-opacity="0.42"/><rect x="67" y="10" width="1" height="1" fill-opacity="0.25"/><rect x="68" y="10" width="1" height="1" fill-opacity="0.75"/><rect x="69" y="10" width="2" height="1" fill-opacity="1.00"/><rect x="71" y="10" width="1" height="1" fill-opacity="0.92"/><rect x="72" y="10" width="1" height="1" fill-opacity="0.25"/><rect x="74" y="10" width="1" height="1" fill-opacity="0.58"/><rect x="75" y="10" width="1" height="1" fill-opacity="0.25"/><rect x="78" y="10" width="1" height="1" fill-opacity="0.58"/><rect x="79" y="10" width="1" height="1" fill-opacity="0.17"/><rect x="80" y="10" width="1" height="1" fill-opacity="0.50"/><rect x="81" y="10" width="1" height="1" fill-opacity="0.42"/><rect x="88" y="10" width="1" height="1" fill-opacity="0.33"/><rect x="89" y="10" width="1" height="1" fill-opacity="0.42"/><rect x="94" y="10" width="1" height="1" fill-opacity="0.17"/><rect x="95" y="10" width="1" height="1" fill-opacity="0.33"/><rect x="96" y="10" width="1" height="1" fill-opacity="0.08"/><rect x="101" y="10" width="1" height="1" fill-opacity="0.17"/><rect x="102" y="10" width="1" height="1" fill-opacity="0.58"/><rect x="103" y="10" width="3" height="1" fill-opacity="1.00"/><rect x="106" y="10" width="1" height="1" fill-opacity="0.42"/><rect x="108" y="10" width="1" height="1" fill-opacity="0.58"/><rect x="109" y="10" width="1" height="1" fill-opacity="0.25"/><rect x="5" y="11" width="1" height="1" fill-opacity="0.42"/><rect x="6" y="11" width="1" height="1" fill-opacity="0.17"/><rect x="8" y="11" width="1" height="1" fill-opacity="0.08"/><rect x="9" y="11" width="1" height="1" fill-opacity="0.50"/><rect x="10" y="11" width="1" height="1" fill-opacity="0.58"/><rect x="11" y="11" width="1" height="1" fill-opacity="0.83"/><rect x="12" y="11" width="1" height="1" fill-opacity="0.50"/><rect x="15" y="11" width="1" height="1" fill-opacity="0.33"/><rect x="16" y="11" width="1" height="1" fill-opacity="0.92"/><rect x="17" y="11" width="1" height="1" fill-opacity="0.42"/><rect x="20" y="11" width="1" height="1" fill-opacity="0.25"/><rect x="21" y="11" width="1" height="1" fill-opacity="0.17"/><rect x="26" y="11" width="1" height="1" fill-opacity="0.25"/><rect x="27" y="11" width="1" height="1" fill-opacity="0.08"/><rect x="32" y="11" width="1" height="1" fill-opacity="0.25"/><rect x="33" y="11" width="1" height="1" fill-opacity="0.67"/><rect x="36" y="11" width="1" height="1" fill-opacity="0.08"/><rect x="38" y="11" width="2" height="1" fill-opacity="0.08"/><rect x="40" y="11" width="1" height="1" fill-opacity="0.33"/><rect x="41" y="11" width="1" height="1" fill-opacity="0.25"/><rect x="45" y="11" width="1" height="1" fill-opacity="0.42"/><rect x="46" y="11" width="1" height="1" fill-opacity="0.83"/><rect x="47" y="11" width="1" height="1" fill-opacity="0.50"/><rect x="48" y="11" width="1" height="1" fill-opacity="0.25"/><rect x="49" y="11" width="1" height="1" fill-opacity="0.08"/><rect x="56" y="11" width="1" height="1" fill-opacity="0.08"/><rect x="66" y="11" width="1" height="1" fill-opacity="0.08"/><rect x="67" y="11" width="1" height="1" fill-opacity="0.58"/><rect x="68" y="11" width="1" height="1" fill-opacity="0.83"/><rect x="69" y="11" width="1" height="1" fill-opacity="0.42"/><rect x="70" y="11" width="1" height="1" fill-opacity="0.17"/><rect x="71" y="11" width="1" height="1" fill-opacity="0.08"/><rect x="74" y="11" width="1" height="1" fill-opacity="0.42"/><rect x="75" y="11" width="1" height="1" fill-opacity="0.58"/><rect x="78" y="11" width="1" height="1" fill-opacity="0.50"/><rect x="79" y="11" width="1" height="1" fill-opacity="1.00"/><rect x="80" y="11" width="1" height="1" fill-opacity="0.83"/><rect x="81" y="11" width="1" height="1" fill-opacity="0.42"/><rect x="88" y="11" width="1" height="1" fill-opacity="0.25"/><rect x="89" y="11" width="1" height="1" fill-opacity="0.67"/><rect x="90" y="11" width="1" height="1" fill-opacity="0.08"/><rect x="92" y="11" width="1" height="1" fill-opacity="0.08"/><rect x="93" y="11" width="1" height="1" fill-opacity="0.50"/><rect x="94" y="11" width="1" height="1" fill-opacity="0.58"/><rect x="95" y="11" width="1" height="1" fill-opacity="0.83"/><rect x="96" y="11" width="1" height="1" fill-opacity="0.50"/><rect x="101" y="11" width="1" height="1" fill-opacity="0.42"/><rect x="102" y="11" width="1" height="1" fill-opacity="0.83"/><rect x="103" y="11" width="1" height="1" fill-opacity="0.50"/><rect x="104" y="11" width="1" height="1" fill-opacity="0.25"/><rect x="105" y="11" width="1" height="1" fill-opacity="0.08"/><rect x="108" y="11" width="1" height="1" fill-opacity="0.58"/><rect x="109" y="11" width="1" height="1" fill-opacity="0.25"/><rect x="4" y="12" width="1" height="1" fill-opacity="0.08"/><rect x="5" y="12" width="1" height="1" fill-opacity="0.75"/><rect x="6" y="12" width="1" height="1" fill-opacity="0.50"/><rect x="7" y="12" width="1" height="1" fill-opacity="0.17"/><rect x="8" y="12" width="2" height="1" fill-opacity="0.75"/><rect x="10" y="12" width="1" height="1" fill-opacity="0.17"/><rect x="11" y="12" width="1" height="1" fill-opacity="0.42"/><rect x="12" y="12" width="1" height="1" fill-opacity="0.92"/><rect x="13" y="12" width="1" height="1" fill-opacity="0.33"/><rect x="15" y="12" width="1" height="1" fill-opacity="0.08"/><rect x="16" y="12" width="1" height="1" fill-opacity="0.67"/><rect x="17" y="12" width="1" height="1" fill-opacity="1.00"/><rect x="18" y="12" width="2" height="1" fill-opacity="0.92"/><rect x="20" y="12" width="1" height="1" fill-opacity="0.75"/><rect x="21" y="12" width="1" height="1" fill-opacity="0.17"/><rect x="26" y="12" width="1" height="1" fill-opacity="0.33"/><rect x="32" y="12" width="1" height="1" fill-opacity="0.08"/><rect x="33" y="12" width="1" height="1" fill-opacity="0.58"/><rect x="34" y="12" width="1" height="1" fill-opacity="0.08"/><rect x="35" y="12" width="1" height="1" fill-opacity="0.33"/><rect x="36" y="12" width="1" height="1" fill-opacity="0.75"/><rect x="37" y="12" width="1" height="1" fill-opacity="0.25"/><rect x="38" y="12" width="1" height="1" fill-opacity="0.67"/><rect x="39" y="12" width="1" height="1" fill-opacity="0.50"/><rect x="40" y="12" width="2" height="1" fill-opacity="0.67"/><rect x="43" y="12" width="1" height="1" fill-opacity="0.25"/><rect x="44" y="12" width="1" height="1" fill-opacity="0.67"/><rect x="45" y="12" width="1" height="1" fill-opacity="0.83"/><rect x="46" y="12" width="1" height="1" fill-opacity="0.17"/><rect x="55" y="12" width="1" height="1" fill-opacity="0.25"/><rect x="56" y="12" width="1" height="1" fill-opacity="0.17"/><rect x="64" y="12" width="1" height="1" fill-opacity="0.08"/><rect x="65" y="12" width="1" height="1" fill-opacity="0.33"/><rect x="66" y="12" width="1" height="1" fill-opacity="0.83"/><rect x="67" y="12" width="1" height="1" fill-opacity="0.67"/><rect x="68" y="12" width="1" height="1" fill-opacity="0.17"/><rect x="69" y="12" width="2" height="1" fill-opacity="0.58"/><rect x="71" y="12" width="1" height="1" fill-opacity="0.17"/><rect x="73" y="12" width="1" height="1" fill-opacity="0.17"/><rect x="74" y="12" width="1" height="1" fill-opacity="0.75"/><rect x="75" y="12" width="1" height="1" fill-opacity="0.92"/><rect x="76" y="12" width="1" height="1" fill-opacity="0.33"/><rect x="78" y="12" width="1" height="1" fill-opacity="0.08"/><rect x="79" y="12" width="1" height="1" fill-opacity="0.42"/><rect x="80" y="12" width="1" height="1" fill-opacity="0.58"/><rect x="81" y="12" width="1" height="1" fill-opacity="0.33"/><rect x="86" y="12" width="1" height="1" fill-opacity="0.17"/><rect x="87" y="12" width="2" height="1" fill-opacity="0.08"/><rect x="89" y="12" width="1" height="1" fill-opacity="0.83"/><rect x="90" y="12" width="1" height="1" fill-opacity="0.67"/><rect x="91" y="12" width="1" height="1" fill-opacity="0.25"/><rect x="92" y="12" width="2" height="1" fill-opacity="0.75"/><rect x="94" y="12" width="1" height="1" fill-opacity="0.17"/><rect x="95" y="12" width="1" height="1" fill-opacity="0.42"/><rect x="96" y="12" width="1" height="1" fill-opacity="0.92"/><rect x="97" y="12" width="1" height="1" fill-opacity="0.33"/><rect x="99" y="12" width="1" height="1" fill-opacity="0.25"/><rect x="100" y="12" width="1" height="1" fill-opacity="0.67"/><rect x="101" y="12" width="1" height="1" fill-opacity="0.83"/><rect x="102" y="12" width="1" height="1" fill-opacity="0.17"/><rect x="108" y="12" width="1" height="1" fill-opacity="0.50"/><rect x="109" y="12" width="1" height="1" fill-opacity="0.17"/><rect x="5" y="13" width="1" height="1" fill-opacity="0.58"/><rect x="6" y="13" width="2" height="1" fill-opacity="0.92"/><rect x="8" y="13" width="1" height="1" fill-opacity="0.67"/><rect x="9" y="13" width="1" height="1" fill-opacity="0.50"/><rect x="10" y="13" width="1" height="1" fill-opacity="1.00"/><rect x="11" y="13" width="1" height="1" fill-opacity="0.92"/><rect x="12" y="13" width="1" height="1" fill-opacity="0.58"/><rect x="13" y="13" width="1" height="1" fill-opacity="0.92"/><rect x="14" y="13" width="3" height="1" fill-opacity="1.00"/><rect x="17" y="13" width="1" height="1" fill-opacity="0.75"/><rect x="18" y="13" width="1" height="1" fill-opacity="0.50"/><rect x="19" y="13" width="1" height="1" fill-opacity="0.17"/><rect x="25" y="13" width="1" height="1" fill-opacity="0.08"/><rect x="26" y="13" width="1" height="1" fill-opacity="0.42"/><rect x="33" y="13" width="1" height="1" fill-opacity="0.75"/><rect x="34" y="13" width="2" height="1" fill-opacity="0.92"/><rect x="36" y="13" width="1" height="1" fill-opacity="0.67"/><rect x="37" y="13" width="1" height="1" fill-opacity="1.00"/><rect x="38" y="13" width="4" height="1" fill-opacity="0.92"/><rect x="42" y="13" width="1" height="1" fill-opacity="1.00"/><rect x="43" y="13" width="1" height="1" fill-opacity="0.92"/><rect x="44" y="13" width="1" height="1" fill-opacity="0.58"/><rect x="45" y="13" width="1" height="1" fill-opacity="0.08"/><rect x="55" y="13" width="1" height="1" fill-opacity="0.42"/><rect x="56" y="13" width="1" height="1" fill-opacity="0.08"/><rect x="60" y="13" width="1" height="1" fill-opacity="0.33"/><rect x="61" y="13" width="1" height="1" fill-opacity="0.83"/><rect x="62" y="13" width="3" height="1" fill-opacity="1.00"/><rect x="65" y="13" width="1" height="1" fill-opacity="0.83"/><rect x="66" y="13" width="1" height="1" fill-opacity="0.42"/><rect x="69" y="13" width="1" height="1" fill-opacity="0.17"/><rect x="70" y="13" width="1" height="1" fill-opacity="0.67"/><rect x="71" y="13" width="1" height="1" fill-opacity="0.83"/><rect x="72" y="13" width="1" height="1" fill-opacity="0.92"/><rect x="73" y="13" width="1" height="1" fill-opacity="1.00"/><rect x="74" y="13" width="1" height="1" fill-opacity="0.58"/><rect x="75" y="13" width="1" height="1" fill-opacity="0.42"/><rect x="76" y="13" width="1" height="1" fill-opacity="0.92"/><rect x="77" y="13" width="2" height="1" fill-opacity="1.00"/><rect x="79" y="13" width="1" height="1" fill-opacity="0.83"/><rect x="80" y="13" width="1" height="1" fill-opacity="0.50"/><rect x="81" y="13" width="1" height="1" fill-opacity="0.08"/><rect x="86" y="13" width="1" height="1" fill-opacity="0.42"/><rect x="87" y="13" width="2" height="1" fill-opacity="1.00"/><rect x="89" y="13" width="1" height="1" fill-opacity="0.83"/><rect x="90" y="13" width="1" height="1" fill-opacity="1.00"/><rect x="91" y="13" width="1" height="1" fill-opacity="0.92"/><rect x="92" y="13" width="1" height="1" fill-opacity="0.67"/><rect x="93" y="13" width="1" height="1" fill-opacity="0.50"/><rect x="94" y="13" width="1" height="1" fill-opacity="1.00"/><rect x="95" y="13" width="1" height="1" fill-opacity="0.92"/><rect x="96" y="13" width="1" height="1" fill-opacity="0.58"/><rect x="97" y="13" width="1" height="1" fill-opacity="0.92"/><rect x="98" y="13" width="1" height="1" fill-opacity="1.00"/><rect x="99" y="13" width="1" height="1" fill-opacity="0.92"/><rect x="100" y="13" width="1" height="1" fill-opacity="0.58"/><rect x="101" y="13" width="1" height="1" fill-opacity="0.08"/><rect x="108" y="13" width="1" height="1" fill-opacity="0.33"/><rect x="109" y="13" width="1" height="1" fill-opacity="0.08"/><rect x="4" y="14" width="1" height="1" fill-opacity="0.17"/><rect x="5" y="14" width="1" height="1" fill-opacity="0.58"/><rect x="6" y="14" width="1" height="1" fill-opacity="0.08"/><rect x="25" y="14" width="1" height="1" fill-opacity="0.08"/><rect x="26" y="14" width="1" height="1" fill-opacity="0.58"/><rect x="27" y="14" width="1" height="1" fill-opacity="0.17"/><rect x="32" y="14" width="1" height="1" fill-opacity="0.17"/><rect x="33" y="14" width="1" height="1" fill-opacity="0.33"/><rect x="54" y="14" width="1" height="1" fill-opacity="0.08"/><rect x="55" y="14" width="1" height="1" fill-opacity="0.58"/><rect x="56" y="14" width="1" height="1" fill-opacity="0.08"/><rect x="60" y="14" width="1" height="1" fill-opacity="0.50"/><rect x="61" y="14" width="1" height="1" fill-opacity="0.92"/><rect x="62" y="14" width="1" height="1" fill-opacity="0.58"/><rect x="63" y="14" width="1" height="1" fill-opacity="0.17"/><rect x="108" y="14" width="1" height="1" fill-opacity="0.08"/><rect x="3" y="15" width="1" height="1" fill-opacity="0.17"/><rect x="4" y="15" width="1" height="1" fill-opacity="0.83"/><rect x="5" y="15" width="1" height="1" fill-opacity="0.50"/><rect x="26" y="15" width="1" height="1" fill-opacity="0.58"/><rect x="27" y="15" width="1" height="1" fill-opacity="0.67"/><rect x="28" y="15" width="1" height="1" fill-opacity="0.17"/><rect x="31" y="15" width="1" height="1" fill-opacity="0.25"/><rect x="32" y="15" width="1" height="1" fill-opacity="0.75"/><rect x="33" y="15" width="1" height="1" fill-opacity="0.25"/><rect x="55" y="15" width="1" height="1" fill-opacity="0.58"/><rect x="56" y="15" width="1" height="1" fill-opacity="0.75"/><rect x="57" y="15" width="1" height="1" fill-opacity="0.25"/><rect x="58" y="15" width="2" height="1" fill-opacity="0.08"/><rect x="60" y="15" width="1" height="1" fill-opacity="0.25"/><rect x="61" y="15" width="1" height="1" fill-opacity="0.50"/><rect x="62" y="15" width="1" height="1" fill-opacity="0.92"/><rect x="63" y="15" width="1" height="1" fill-opacity="0.42"/><rect x="1" y="16" width="1" height="1" fill-opacity="0.08"/><rect x="2" y="16" width="1" height="1" fill-opacity="0.42"/><rect x="3" y="16" width="1" height="1" fill-opacity="0.92"/><rect x="4" y="16" width="1" height="1" fill-opacity="0.67"/><rect x="5" y="16" width="1" height="1" fill-opacity="0.08"/><rect x="26" y="16" width="1" height="1" fill-opacity="0.08"/><rect x="27" y="16" width="1" height="1" fill-opacity="0.58"/><rect x="28" y="16" width="1" height="1" fill-opacity="0.92"/><rect x="29" y="16" width="2" height="1" fill-opacity="1.00"/><rect x="31" y="16" width="1" height="1" fill-opacity="0.92"/><rect x="32" y="16" width="1" height="1" fill-opacity="0.42"/><rect x="55" y="16" width="1" height="1" fill-opacity="0.08"/><rect x="56" y="16" width="1" height="1" fill-opacity="0.75"/><rect x="57" y="16" width="4" height="1" fill-opacity="1.00"/><rect x="61" y="16" width="1" height="1" fill-opacity="0.92"/><rect x="62" y="16" width="1" height="1" fill-opacity="0.42"/><rect x="1" y="17" width="1" height="1" fill-opacity="0.50"/><rect x="2" y="17" width="1" height="1" fill-opacity="0.67"/><rect x="3" y="17" width="1" height="1" fill-opacity="0.33"/><rect x="29" y="17" width="2" height="1" fill-opacity="0.17"/><rect x="57" y="17" width="1" height="1" fill-opacity="0.08"/><rect x="58" y="17" width="2" height="1" fill-opacity="0.25"/><rect x="60" y="17" width="1" height="1" fill-opacity="0.08"/></svg>
<div style="position:absolute;left:494.5px;top:616px;width:250.0px;height:48px;overflow:hidden"><div style="position:absolute;left:10.2px;top:17.15px;font-size:15.3px;line-height:15.3px;color:#333;white-space:nowrap;letter-spacing:-0.39px">Ahmed Fathy Hassan Omer</div></div>
<div style="position:absolute;left:744.5px;top:616px;width:250.0px;height:48px;overflow:hidden"><div style="position:absolute;left:10.2px;top:17.15px;font-size:15.3px;line-height:15.3px;color:#333;white-space:nowrap;letter-spacing:-0.39px">Ahmed Fathy Hassan Omer</div></div>
<div style="position:absolute;left:994.5px;top:616px;width:250.0px;height:48px;overflow:hidden"><div style="position:absolute;left:10.2px;top:17.15px;font-size:15.3px;line-height:15.3px;color:#333;white-space:nowrap;">Development</div></div>
<div style="position:absolute;left:1244.5px;top:616px;width:250.0px;height:48px;overflow:hidden"><div style="position:absolute;left:10.2px;top:17.15px;font-size:15.3px;line-height:15.3px;color:#333;white-space:nowrap;">Development Unit</div></div>
<div style="position:absolute;left:1744.5px;top:616px;width:65.5px;height:48px;overflow:hidden"><div style="position:absolute;left:10.2px;top:17.15px;font-size:15.3px;line-height:15.3px;color:#333;white-space:nowrap;">Development</div></div>
<div style="position:absolute;left:57px;top:664px;width:187.5px;height:47px;overflow:hidden"><div style="position:absolute;left:10px;top:16.65px;font-size:15.3px;line-height:15.3px;color:#333;white-space:nowrap;">6</div></div>
<div style="position:absolute;left:244.5px;top:664px;width:250.0px;height:47px;overflow:hidden"><div style="position:absolute;left:10.2px;top:16.65px;font-size:15.3px;line-height:15.3px;color:#333;white-space:nowrap;letter-spacing:-0.2px">Mohamed Omara</div></div>
<div style="position:absolute;left:494.5px;top:664px;width:250.0px;height:47px;overflow:hidden"><div style="position:absolute;left:10.2px;top:16.65px;font-size:15.3px;line-height:15.3px;color:#333;white-space:nowrap;letter-spacing:-0.2px">Mohamed Omara</div></div>
<div style="position:absolute;left:744.5px;top:664px;width:250.0px;height:47px;overflow:hidden"><div style="position:absolute;left:10.2px;top:16.65px;font-size:15.3px;line-height:15.3px;color:#333;white-space:nowrap;letter-spacing:-0.2px">Mohamed Omara</div></div>
<div style="position:absolute;left:994.5px;top:664px;width:250.0px;height:47px;overflow:hidden"><div style="position:absolute;left:10.2px;top:16.65px;font-size:15.3px;line-height:15.3px;color:#333;white-space:nowrap;">Development</div></div>
<div style="position:absolute;left:1244.5px;top:664px;width:250.0px;height:47px;overflow:hidden"><div style="position:absolute;left:10.2px;top:16.65px;font-size:15.3px;line-height:15.3px;color:#333;white-space:nowrap;">Development Unit</div></div>
<div style="position:absolute;left:1744.5px;top:664px;width:65.5px;height:47px;overflow:hidden"><div style="position:absolute;left:10.2px;top:16.65px;font-size:15.3px;line-height:15.3px;color:#333;white-space:nowrap;">Dev. team</div></div>
<div style="position:absolute;left:1810px;top:454.5px;width:18.5px;height:256.5px;background:#fafafa"></div>
<svg style="position:absolute;left:1809px;top:454.5px" width="19" height="257"><path d="M3 15H16L9.5 8.5Z" fill="#8f8f8f"/><path d="M3.5 242.5H16.5L10 249Z" fill="#8f8f8f"/></svg>
<div style="position:absolute;left:57px;top:711px;width:1771.5px;height:20.5px;background:#fafafa"></div>
<svg style="position:absolute;left:57px;top:711px" width="1770" height="20"><path d="M13 3.8V17L6 10.4Z" fill="#8d8d8d"/><path d="M1739 3.8V17L1746 10.4Z" fill="#8d8d8d"/></svg>
<div style="position:absolute;left:79px;top:716px;width:999px;height:11px;background:#8a8a8a;border-radius:5.5px"></div>
<div style="position:absolute;left:57px;top:731px;width:1771.5px;height:50.5px;background:linear-gradient(#f5f5f5,#e8e7e7);border-top:1px solid #c9c9c9;box-sizing:border-box"></div>
<div style="position:absolute;left:62px;top:738.1px;width:34.8px;height:34.6px;border:1px solid #cfcfcf;border-radius:50%;box-sizing:border-box"></div>
<div style="position:absolute;left:100px;top:738.1px;width:34.8px;height:34.6px;border:1px solid #cfcfcf;border-radius:50%;box-sizing:border-box"></div>
<div style="position:absolute;left:139.2px;top:738px;width:34.8px;height:36.5px;background:linear-gradient(#dcdcdc,#cfcfcf);border:1px solid #a9a9a9;border-radius:50%;box-sizing:border-box"></div>
<div style="position:absolute;left:359.2px;top:738.1px;width:34.8px;height:34.6px;border:1px solid #cfcfcf;border-radius:50%;box-sizing:border-box"></div>
<div style="position:absolute;left:397.3px;top:738.1px;width:34.8px;height:34.6px;border:1px solid #cfcfcf;border-radius:50%;box-sizing:border-box"></div>
<svg style="position:absolute;left:62px;top:738px" width="372" height="36">
<path d="M14.5 6.8V15.2" stroke="#8a817f" stroke-width="1.8"/><path d="M23 6.8V15.2L16 11Z" fill="#8a817f"/>
<path d="M58 6.8V15.2L51 11Z" fill="#8a817f"/>
<path d="M311 6.8V15.2L318 11Z" fill="#5a504d"/>
<path d="M347.5 6.8V15.2L354.5 11Z" fill="#5a504d"/><path d="M356 6.8V15.2" stroke="#5a504d" stroke-width="1.8"/>
</svg>
<div style="position:absolute;left:-143.7px;width:600px;text-align:center;top:749.10px;font-size:16px;line-height:16px;font-weight:400;color:#222;white-space:nowrap;">1</div>
<div style="position:absolute;left:-107.6px;width:600px;text-align:center;top:749.10px;font-size:16px;line-height:16px;font-weight:400;color:#333;white-space:nowrap;">2</div>
<div style="position:absolute;left:-71.6px;width:600px;text-align:center;top:749.10px;font-size:16px;line-height:16px;font-weight:400;color:#333;white-space:nowrap;">3</div>
<div style="position:absolute;left:-35.10000000000002px;width:600px;text-align:center;top:749.10px;font-size:16px;line-height:16px;font-weight:400;color:#333;white-space:nowrap;">4</div>
<div style="position:absolute;left:0.8999999999999773px;width:600px;text-align:center;top:749.10px;font-size:16px;line-height:16px;font-weight:400;color:#333;white-space:nowrap;">5</div>
<div style="position:absolute;left:37.39999999999998px;width:600px;text-align:center;top:749.10px;font-size:16px;line-height:16px;font-weight:400;color:#333;white-space:nowrap;">...</div>
<div style="position:absolute;left:465.3px;top:737.2px;width:78.3px;height:38.4px;background:linear-gradient(#f6f6f6,#ebeaea);border:1px solid #cacaca;border-radius:4px;box-sizing:border-box"></div>
<div style="position:absolute;left:472.2px;top:748.90px;font-size:16px;line-height:16px;font-weight:400;color:#333;white-space:nowrap;">5</div>
<svg style="position:absolute;left:520px;top:752px" width="12" height="10"><path d="M1.8 1.3H10.5L6.15 8.3Z" fill="#5a504d"/></svg>
<div style="position:absolute;left:551.5px;top:747.80px;font-size:16.2px;line-height:16.2px;font-weight:400;color:#333;white-space:nowrap;">items per page</div>
<div style="position:absolute;left:686.3px;top:744.4px;width:36.6px;height:26.4px;background:linear-gradient(#f6f6f6,#ebeaea);border:1px solid #c9c9c9;border-radius:4px;box-sizing:border-box"></div>
<svg style="position:absolute;left:686px;top:744px" width="37" height="27"><circle cx="18.5" cy="13.4" r="7.3" fill="none" stroke="#111" stroke-width="2.5"/><path d="M13.5 18.6L23.6 8.4" stroke="#111" stroke-width="2.5"/></svg>
<div style="position:absolute;left:1616px;top:747.50px;font-size:15.6px;line-height:15.6px;font-weight:400;color:#333;white-space:nowrap;">1 - 5 From 101 items</div>
<svg style="position:absolute;left:1794px;top:738px" width="18" height="18"><path d="M8.8 4.6A5.6 5.6 0 1 0 13.5 6.8" fill="none" stroke="#5e5553" stroke-width="1.8"/><path d="M8.6 1.6L12.8 3.9L8.8 7Z" fill="#5e5553"/></svg>
</body></html>
